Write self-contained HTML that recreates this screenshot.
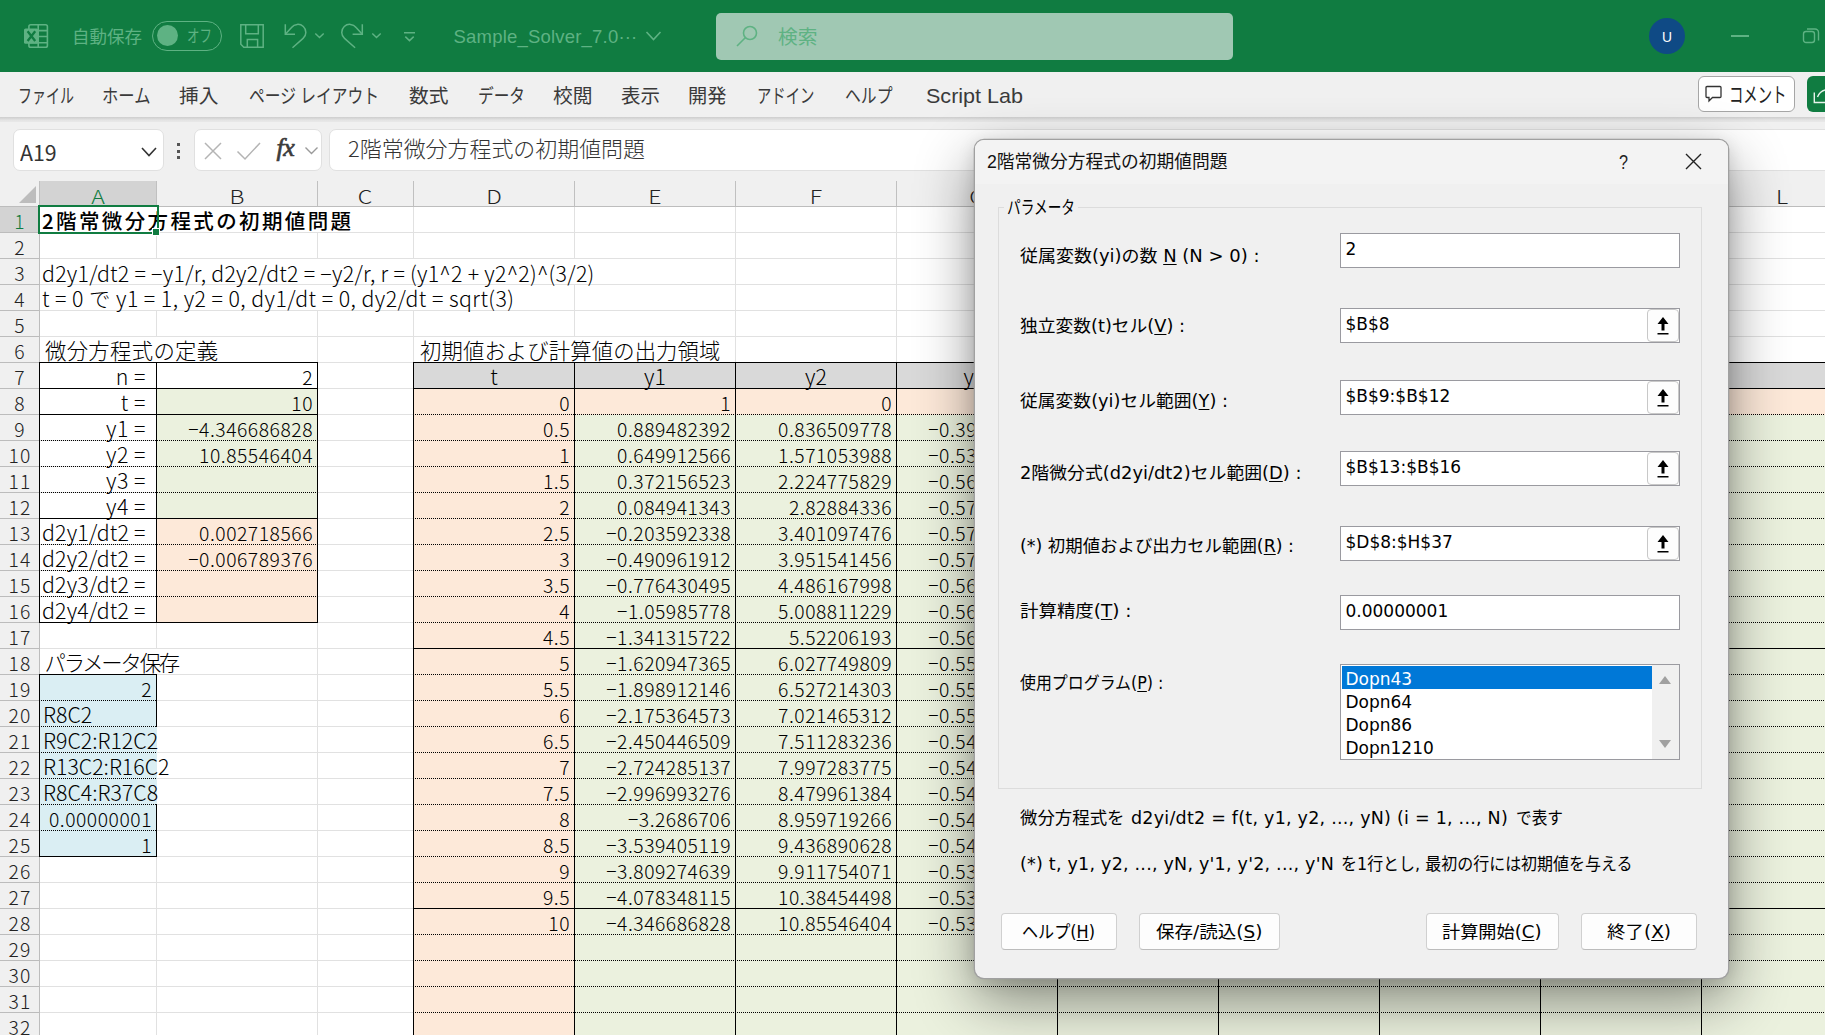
<!DOCTYPE html>
<html lang="ja"><head><meta charset="utf-8"><title>Excel</title>
<style>html,body{margin:0;padding:0}body{width:1825px;height:1035px;overflow:hidden;position:relative;background:#fff;font-family:"Liberation Sans","Noto Sans CJK JP",sans-serif}u{text-underline-offset:2px}</style>
</head><body>
<div style="position:absolute;left:0px;top:0px;width:1825px;height:72px;background:#107c41;"></div>
<svg style="position:absolute;left:0;top:0" width="1825" height="72" viewBox="0 0 1825 72" fill="none" stroke="#5eb283" stroke-width="1.5">
<rect x="28.900" y="24.700" width="18.500" height="22.600" rx="1.800" stroke-width="1.600"/>
<path d="M38.200 24.700v22.600M28.900 30.600h18.500M38.200 36.500h9.200M28.900 42.700h18.500" stroke-width="1.600"/>
<rect x="24" y="28.500" width="14.200" height="15.300" rx="1.600" fill="#5eb283" stroke="none"/>
<path d="M27.600 31.300l7.600 9.700M35.200 31.300l-7.600 9.700" stroke="#107c41" stroke-width="2.300"/>
<path d="M240.800 24.800h22.400v22.400h-19.400l-3-3z"/><path d="M245.700 24.800v9h12.600v-9M247.300 47.200v-7.700h10.300v7.700"/>
<path d="M285.300 24.300v10h9.700"/><path d="M285.800 33.800l5.700-6.300a8 8 0 1 1 11.600 10.900l-10.600 9.300"/>
<path d="M315.300 33.500l4.200 4 4.200-4"/>
<path d="M362.300 24.300v10h-9.700"/><path d="M361.800 33.800l-5.700-6.300a8 8 0 1 0 -11.600 10.900l10.600 9.300"/>
<path d="M372.300 33.500l4.200 4 4.200-4"/>
<path d="M404 32.750h11M405.300 36.600l4.200 4 4.200-4"/>
</svg>
<span style="position:absolute;white-space:pre;left:72px;top:22.02px;height:30px;line-height:30px;font-family:'Liberation Sans','Noto Sans CJK JP',sans-serif;font-size:17.5px;color:#5eb283;font-weight:normal;transform:scaleX(1.0000);transform-origin:0 50%;">自動保存</span>
<div style="position:absolute;left:152px;top:21px;width:70px;height:29.5px;border:1px solid #5eb283;border-radius:15px;box-sizing:border-box;"></div>
<div style="position:absolute;left:157px;top:25px;width:21px;height:21px;background:#5eb283;border-radius:50%;"></div>
<span style="position:absolute;white-space:pre;left:187px;top:22.01px;height:30px;line-height:30px;font-family:'Liberation Sans','Noto Sans CJK JP',sans-serif;font-size:17px;color:#5eb283;font-weight:normal;transform:scaleX(0.7353);transform-origin:0 50%;">オフ</span>
<span style="position:absolute;white-space:pre;left:453.5px;top:22.00px;height:30px;line-height:30px;font-family:'Liberation Sans','Noto Sans CJK JP',sans-serif;font-size:18.5px;color:#5eb283;font-weight:normal;letter-spacing:0.202px;">Sample_Solver_7.0···</span>
<svg style="position:absolute;left:645px;top:30px" width="17" height="12" viewBox="0 0 17 12" fill="none" stroke="#5eb283" stroke-width="1.600"><path d="M1.500 2l7 7.500 7-7.500"/></svg>
<div style="position:absolute;left:716px;top:12.5px;width:517px;height:47px;background:#a0c8b3;border-radius:5px;"></div>
<svg style="position:absolute;left:736px;top:25px" width="22" height="22" viewBox="0 0 22 22" fill="none" stroke="#5eb283" stroke-width="1.600"><circle cx="14" cy="8" r="6.500"/><path d="M9.500 12.500l-8.500 8.500"/></svg>
<span style="position:absolute;white-space:pre;left:778px;top:22.09px;height:30px;line-height:30px;font-family:'Liberation Sans','Noto Sans CJK JP',sans-serif;font-size:19.5px;color:#5eb283;font-weight:normal;transform:scaleX(1.0124);transform-origin:0 50%;">検索</span>
<div style="position:absolute;left:1649px;top:18px;width:36px;height:36px;background:#0f4a85;border-radius:50%;"></div>
<span style="position:absolute;white-space:pre;left:1662px;top:21.50px;height:30px;line-height:30px;font-family:'Liberation Sans','Noto Sans CJK JP',sans-serif;font-size:14px;color:#fff;font-weight:normal;transform:scaleX(0.9877);transform-origin:0 50%;">U</span>
<div style="position:absolute;left:1731px;top:35px;width:18px;height:1.5px;background:#5eb283;"></div>
<svg style="position:absolute;left:1802px;top:27px" width="18" height="18" viewBox="0 0 18 18" fill="none" stroke="#5eb283" stroke-width="1.400"><rect x="1.500" y="4.500" width="11" height="11" rx="2.500"/><path d="M5 2h8a3.500 3.500 0 0 1 3.500 3.500v8"/></svg>
<div style="position:absolute;left:0px;top:72px;width:1825px;height:46px;background:#f0f0f0;"></div>
<div style="position:absolute;left:0px;top:117px;width:1825px;height:8px;background:linear-gradient(#cdcdcd,#e4e4e4 40%,#f0f0f0);"></div>
<span style="position:absolute;white-space:pre;left:17.5px;top:81.09px;height:30px;line-height:30px;font-family:'Liberation Sans','Noto Sans CJK JP',sans-serif;font-size:19.8px;color:#3a3a3a;font-weight:normal;transform:scaleX(0.7076);transform-origin:0 50%;">ファイル</span>
<span style="position:absolute;white-space:pre;left:101.5px;top:81.09px;height:30px;line-height:30px;font-family:'Liberation Sans','Noto Sans CJK JP',sans-serif;font-size:19.8px;color:#3a3a3a;font-weight:normal;transform:scaleX(0.8253);transform-origin:0 50%;">ホーム</span>
<span style="position:absolute;white-space:pre;left:179px;top:81.09px;height:30px;line-height:30px;font-family:'Liberation Sans','Noto Sans CJK JP',sans-serif;font-size:19.8px;color:#3a3a3a;font-weight:normal;transform:scaleX(0.9980);transform-origin:0 50%;">挿入</span>
<span style="position:absolute;white-space:pre;left:248.5px;top:81.09px;height:30px;line-height:30px;font-family:'Liberation Sans','Noto Sans CJK JP',sans-serif;font-size:19.8px;color:#3a3a3a;font-weight:normal;transform:scaleX(0.7958);transform-origin:0 50%;">ページ レイアウト</span>
<span style="position:absolute;white-space:pre;left:409px;top:81.09px;height:30px;line-height:30px;font-family:'Liberation Sans','Noto Sans CJK JP',sans-serif;font-size:19.8px;color:#3a3a3a;font-weight:normal;transform:scaleX(0.9980);transform-origin:0 50%;">数式</span>
<span style="position:absolute;white-space:pre;left:477.5px;top:81.09px;height:30px;line-height:30px;font-family:'Liberation Sans','Noto Sans CJK JP',sans-serif;font-size:19.8px;color:#3a3a3a;font-weight:normal;transform:scaleX(0.7918);transform-origin:0 50%;">データ</span>
<span style="position:absolute;white-space:pre;left:553px;top:81.09px;height:30px;line-height:30px;font-family:'Liberation Sans','Noto Sans CJK JP',sans-serif;font-size:19.8px;color:#3a3a3a;font-weight:normal;transform:scaleX(0.9980);transform-origin:0 50%;">校閲</span>
<span style="position:absolute;white-space:pre;left:620.5px;top:81.09px;height:30px;line-height:30px;font-family:'Liberation Sans','Noto Sans CJK JP',sans-serif;font-size:19.8px;color:#3a3a3a;font-weight:normal;transform:scaleX(0.9854);transform-origin:0 50%;">表示</span>
<span style="position:absolute;white-space:pre;left:688px;top:81.09px;height:30px;line-height:30px;font-family:'Liberation Sans','Noto Sans CJK JP',sans-serif;font-size:19.8px;color:#3a3a3a;font-weight:normal;transform:scaleX(0.9728);transform-origin:0 50%;">開発</span>
<span style="position:absolute;white-space:pre;left:756.5px;top:81.09px;height:30px;line-height:30px;font-family:'Liberation Sans','Noto Sans CJK JP',sans-serif;font-size:19.8px;color:#3a3a3a;font-weight:normal;transform:scaleX(0.7266);transform-origin:0 50%;">アドイン</span>
<span style="position:absolute;white-space:pre;left:845px;top:81.09px;height:30px;line-height:30px;font-family:'Liberation Sans','Noto Sans CJK JP',sans-serif;font-size:19.8px;color:#3a3a3a;font-weight:normal;transform:scaleX(0.8002);transform-origin:0 50%;">ヘルプ</span>
<span style="position:absolute;white-space:pre;left:925.5px;top:80.50px;height:30px;line-height:30px;font-family:'Liberation Sans','Noto Sans CJK JP',sans-serif;font-size:19.8px;color:#3a3a3a;font-weight:normal;transform:scaleX(1.0889);transform-origin:0 50%;">Script Lab</span>
<div style="position:absolute;left:1698px;top:76.3px;width:96.5px;height:35.5px;background:#fff;border:1px solid #a6a6a6;border-radius:6px;box-sizing:border-box;"></div>
<svg style="position:absolute;left:1705px;top:85px" width="18" height="18" viewBox="0 0 18 18" fill="none" stroke="#333" stroke-width="1.300"><path d="M2 1.500h13a1 1 0 0 1 1 1v9a1 1 0 0 1-1 1h-7.500l-3.500 3.500v-3.500h-2a1 1 0 0 1-1-1v-9a1 1 0 0 1 1-1z"/></svg>
<span style="position:absolute;white-space:pre;left:1729px;top:80.33px;height:30px;line-height:30px;font-family:'Liberation Sans','Noto Sans CJK JP',sans-serif;font-size:21px;color:#222;font-weight:normal;transform:scaleX(0.6845);transform-origin:0 50%;">コメント</span>
<div style="position:absolute;left:1807px;top:76.3px;width:30px;height:35.5px;background:#107c41;border-radius:6px;"></div>
<svg style="position:absolute;left:1811px;top:84px" width="16" height="20" viewBox="0 0 16 20" fill="none" stroke="#e8f3ec" stroke-width="1.400"><path d="M3.300 8.500v10h13"/><path d="M6.500 13c1.500-4 5-7 10-7.500"/></svg>
<div style="position:absolute;left:0px;top:122px;width:1825px;height:59px;background:#f0f0f0;"></div>
<div style="position:absolute;left:12.5px;top:129px;width:151px;height:42px;background:#fff;border:1px solid #e0e0e0;border-radius:7px;box-sizing:border-box;"></div>
<span style="position:absolute;white-space:pre;left:19.7px;top:136.50px;height:30px;line-height:30px;font-family:'Noto Sans CJK JP',sans-serif;font-size:21.5px;color:#333;font-weight:400;transform:scaleX(0.9909);transform-origin:0 50%;">A19</span>
<svg style="position:absolute;left:140px;top:146px" width="18" height="12" viewBox="0 0 18 12" fill="none" stroke="#333" stroke-width="1.600"><path d="M2 2l7 7.500 7-7.500"/></svg>
<div style="position:absolute;left:176.5px;top:143px;width:3px;height:3px;background:#555;"></div>
<div style="position:absolute;left:176.5px;top:149.5px;width:3px;height:3px;background:#555;"></div>
<div style="position:absolute;left:176.5px;top:156px;width:3px;height:3px;background:#555;"></div>
<div style="position:absolute;left:194px;top:129px;width:127.5px;height:42px;background:#fff;border:1px solid #e0e0e0;border-radius:7px;box-sizing:border-box;"></div>
<svg style="position:absolute;left:203px;top:141px" width="20" height="20" viewBox="0 0 20 20" fill="none" stroke="#b4b4b4" stroke-width="1.500"><path d="M2 2l16 16M18 2l-16 16"/></svg>
<svg style="position:absolute;left:236px;top:141px" width="26" height="20" viewBox="0 0 26 20" fill="none" stroke="#b4b4b4" stroke-width="1.500"><path d="M1.500 10.500l7.500 7.500 15-16"/></svg>
<span style="position:absolute;left:276.5px;top:133px;font-family:'Liberation Serif',serif;font-style:italic;font-weight:normal;-webkit-text-stroke:0.7px #3c3c3c;font-size:26px;color:#3c3c3c;line-height:30px;letter-spacing:-0.5px">fx</span>
<svg style="position:absolute;left:304px;top:146px" width="15" height="10" viewBox="0 0 15 10" fill="none" stroke="#9a9a9a" stroke-width="1.400"><path d="M1.500 1.500l6 6 6-6"/></svg>
<div style="position:absolute;left:328.5px;top:129px;width:1520px;height:42px;background:#fff;border:1px solid #e0e0e0;border-radius:7px;box-sizing:border-box;"></div>
<span style="position:absolute;white-space:pre;left:348px;top:133.10px;height:30px;line-height:30px;font-family:'Noto Sans CJK JP',sans-serif;font-size:21.5px;color:#333;font-weight:300;transform:scaleX(1.0206);transform-origin:0 50%;">2階常微分方程式の初期値問題</span>
<div id="grid" style="position:absolute;left:0;top:181px;width:1825px;height:854px;overflow:hidden;background:#fff">
<div style="position:absolute;left:0px;top:0px;width:1825px;height:25px;background:#f0f0f0;"></div>
<div style="position:absolute;left:0px;top:25px;width:39px;height:840px;background:#f0f0f0;"></div>
<div style="position:absolute;left:40px;top:0px;width:117px;height:25px;background:#d3d3d3;"></div>
<div style="position:absolute;left:0px;top:26px;width:39px;height:25px;background:#d3d3d3;"></div>
<div style="position:absolute;left:19px;top:5px;width:0;height:0;border-left:17px solid transparent;border-bottom:17px solid #bdbdbd;"></div>
<div style="position:absolute;left:0px;top:25px;width:1825px;height:1px;background:#bdbdbd;"></div>
<div style="position:absolute;left:40px;top:51px;width:1825px;height:1px;background:#e1e1e1;"></div>
<div style="position:absolute;left:0px;top:51px;width:39px;height:1px;background:#bcbcbc;"></div>
<div style="position:absolute;left:40px;top:77px;width:1825px;height:1px;background:#e1e1e1;"></div>
<div style="position:absolute;left:0px;top:77px;width:39px;height:1px;background:#bcbcbc;"></div>
<div style="position:absolute;left:40px;top:103px;width:1825px;height:1px;background:#e1e1e1;"></div>
<div style="position:absolute;left:0px;top:103px;width:39px;height:1px;background:#bcbcbc;"></div>
<div style="position:absolute;left:40px;top:129px;width:1825px;height:1px;background:#e1e1e1;"></div>
<div style="position:absolute;left:0px;top:129px;width:39px;height:1px;background:#bcbcbc;"></div>
<div style="position:absolute;left:40px;top:155px;width:1825px;height:1px;background:#e1e1e1;"></div>
<div style="position:absolute;left:0px;top:155px;width:39px;height:1px;background:#bcbcbc;"></div>
<div style="position:absolute;left:40px;top:181px;width:1825px;height:1px;background:#e1e1e1;"></div>
<div style="position:absolute;left:0px;top:181px;width:39px;height:1px;background:#bcbcbc;"></div>
<div style="position:absolute;left:40px;top:207px;width:1825px;height:1px;background:#e1e1e1;"></div>
<div style="position:absolute;left:0px;top:207px;width:39px;height:1px;background:#bcbcbc;"></div>
<div style="position:absolute;left:40px;top:233px;width:1825px;height:1px;background:#e1e1e1;"></div>
<div style="position:absolute;left:0px;top:233px;width:39px;height:1px;background:#bcbcbc;"></div>
<div style="position:absolute;left:40px;top:259px;width:1825px;height:1px;background:#e1e1e1;"></div>
<div style="position:absolute;left:0px;top:259px;width:39px;height:1px;background:#bcbcbc;"></div>
<div style="position:absolute;left:40px;top:285px;width:1825px;height:1px;background:#e1e1e1;"></div>
<div style="position:absolute;left:0px;top:285px;width:39px;height:1px;background:#bcbcbc;"></div>
<div style="position:absolute;left:40px;top:311px;width:1825px;height:1px;background:#e1e1e1;"></div>
<div style="position:absolute;left:0px;top:311px;width:39px;height:1px;background:#bcbcbc;"></div>
<div style="position:absolute;left:40px;top:337px;width:1825px;height:1px;background:#e1e1e1;"></div>
<div style="position:absolute;left:0px;top:337px;width:39px;height:1px;background:#bcbcbc;"></div>
<div style="position:absolute;left:40px;top:363px;width:1825px;height:1px;background:#e1e1e1;"></div>
<div style="position:absolute;left:0px;top:363px;width:39px;height:1px;background:#bcbcbc;"></div>
<div style="position:absolute;left:40px;top:389px;width:1825px;height:1px;background:#e1e1e1;"></div>
<div style="position:absolute;left:0px;top:389px;width:39px;height:1px;background:#bcbcbc;"></div>
<div style="position:absolute;left:40px;top:415px;width:1825px;height:1px;background:#e1e1e1;"></div>
<div style="position:absolute;left:0px;top:415px;width:39px;height:1px;background:#bcbcbc;"></div>
<div style="position:absolute;left:40px;top:441px;width:1825px;height:1px;background:#e1e1e1;"></div>
<div style="position:absolute;left:0px;top:441px;width:39px;height:1px;background:#bcbcbc;"></div>
<div style="position:absolute;left:40px;top:467px;width:1825px;height:1px;background:#e1e1e1;"></div>
<div style="position:absolute;left:0px;top:467px;width:39px;height:1px;background:#bcbcbc;"></div>
<div style="position:absolute;left:40px;top:493px;width:1825px;height:1px;background:#e1e1e1;"></div>
<div style="position:absolute;left:0px;top:493px;width:39px;height:1px;background:#bcbcbc;"></div>
<div style="position:absolute;left:40px;top:519px;width:1825px;height:1px;background:#e1e1e1;"></div>
<div style="position:absolute;left:0px;top:519px;width:39px;height:1px;background:#bcbcbc;"></div>
<div style="position:absolute;left:40px;top:545px;width:1825px;height:1px;background:#e1e1e1;"></div>
<div style="position:absolute;left:0px;top:545px;width:39px;height:1px;background:#bcbcbc;"></div>
<div style="position:absolute;left:40px;top:571px;width:1825px;height:1px;background:#e1e1e1;"></div>
<div style="position:absolute;left:0px;top:571px;width:39px;height:1px;background:#bcbcbc;"></div>
<div style="position:absolute;left:40px;top:597px;width:1825px;height:1px;background:#e1e1e1;"></div>
<div style="position:absolute;left:0px;top:597px;width:39px;height:1px;background:#bcbcbc;"></div>
<div style="position:absolute;left:40px;top:623px;width:1825px;height:1px;background:#e1e1e1;"></div>
<div style="position:absolute;left:0px;top:623px;width:39px;height:1px;background:#bcbcbc;"></div>
<div style="position:absolute;left:40px;top:649px;width:1825px;height:1px;background:#e1e1e1;"></div>
<div style="position:absolute;left:0px;top:649px;width:39px;height:1px;background:#bcbcbc;"></div>
<div style="position:absolute;left:40px;top:675px;width:1825px;height:1px;background:#e1e1e1;"></div>
<div style="position:absolute;left:0px;top:675px;width:39px;height:1px;background:#bcbcbc;"></div>
<div style="position:absolute;left:40px;top:701px;width:1825px;height:1px;background:#e1e1e1;"></div>
<div style="position:absolute;left:0px;top:701px;width:39px;height:1px;background:#bcbcbc;"></div>
<div style="position:absolute;left:40px;top:727px;width:1825px;height:1px;background:#e1e1e1;"></div>
<div style="position:absolute;left:0px;top:727px;width:39px;height:1px;background:#bcbcbc;"></div>
<div style="position:absolute;left:40px;top:753px;width:1825px;height:1px;background:#e1e1e1;"></div>
<div style="position:absolute;left:0px;top:753px;width:39px;height:1px;background:#bcbcbc;"></div>
<div style="position:absolute;left:40px;top:779px;width:1825px;height:1px;background:#e1e1e1;"></div>
<div style="position:absolute;left:0px;top:779px;width:39px;height:1px;background:#bcbcbc;"></div>
<div style="position:absolute;left:40px;top:805px;width:1825px;height:1px;background:#e1e1e1;"></div>
<div style="position:absolute;left:0px;top:805px;width:39px;height:1px;background:#bcbcbc;"></div>
<div style="position:absolute;left:40px;top:831px;width:1825px;height:1px;background:#e1e1e1;"></div>
<div style="position:absolute;left:0px;top:831px;width:39px;height:1px;background:#bcbcbc;"></div>
<div style="position:absolute;left:40px;top:857px;width:1825px;height:1px;background:#e1e1e1;"></div>
<div style="position:absolute;left:0px;top:857px;width:39px;height:1px;background:#bcbcbc;"></div>
<div style="position:absolute;left:39px;top:26px;width:1px;height:840px;background:#bdbdbd;"></div>
<div style="position:absolute;left:39px;top:0px;width:1px;height:25px;background:#c0c0c0;"></div>
<div style="position:absolute;left:156px;top:26px;width:1px;height:840px;background:#e1e1e1;"></div>
<div style="position:absolute;left:156px;top:0px;width:1px;height:25px;background:#c0c0c0;"></div>
<div style="position:absolute;left:317px;top:26px;width:1px;height:840px;background:#e1e1e1;"></div>
<div style="position:absolute;left:317px;top:0px;width:1px;height:25px;background:#c0c0c0;"></div>
<div style="position:absolute;left:413px;top:26px;width:1px;height:840px;background:#e1e1e1;"></div>
<div style="position:absolute;left:413px;top:0px;width:1px;height:25px;background:#c0c0c0;"></div>
<div style="position:absolute;left:574px;top:26px;width:1px;height:840px;background:#e1e1e1;"></div>
<div style="position:absolute;left:574px;top:0px;width:1px;height:25px;background:#c0c0c0;"></div>
<div style="position:absolute;left:735px;top:26px;width:1px;height:840px;background:#e1e1e1;"></div>
<div style="position:absolute;left:735px;top:0px;width:1px;height:25px;background:#c0c0c0;"></div>
<div style="position:absolute;left:896px;top:26px;width:1px;height:840px;background:#e1e1e1;"></div>
<div style="position:absolute;left:896px;top:0px;width:1px;height:25px;background:#c0c0c0;"></div>
<div style="position:absolute;left:1057px;top:26px;width:1px;height:840px;background:#e1e1e1;"></div>
<div style="position:absolute;left:1057px;top:0px;width:1px;height:25px;background:#c0c0c0;"></div>
<div style="position:absolute;left:1218px;top:26px;width:1px;height:840px;background:#e1e1e1;"></div>
<div style="position:absolute;left:1218px;top:0px;width:1px;height:25px;background:#c0c0c0;"></div>
<div style="position:absolute;left:1379px;top:26px;width:1px;height:840px;background:#e1e1e1;"></div>
<div style="position:absolute;left:1379px;top:0px;width:1px;height:25px;background:#c0c0c0;"></div>
<div style="position:absolute;left:1540px;top:26px;width:1px;height:840px;background:#e1e1e1;"></div>
<div style="position:absolute;left:1540px;top:0px;width:1px;height:25px;background:#c0c0c0;"></div>
<div style="position:absolute;left:1701px;top:26px;width:1px;height:840px;background:#e1e1e1;"></div>
<div style="position:absolute;left:1701px;top:0px;width:1px;height:25px;background:#c0c0c0;"></div>
<div style="position:absolute;left:1862px;top:26px;width:1px;height:840px;background:#e1e1e1;"></div>
<div style="position:absolute;left:1862px;top:0px;width:1px;height:25px;background:#c0c0c0;"></div>
<div style="position:absolute;left:156px;top:26px;width:1px;height:25px;background:#fff;"></div>
<div style="position:absolute;left:317px;top:26px;width:1px;height:25px;background:#fff;"></div>
<div style="position:absolute;left:156px;top:78px;width:1px;height:25px;background:#fff;"></div>
<div style="position:absolute;left:317px;top:78px;width:1px;height:25px;background:#fff;"></div>
<div style="position:absolute;left:413px;top:78px;width:1px;height:25px;background:#fff;"></div>
<div style="position:absolute;left:574px;top:78px;width:1px;height:25px;background:#fff;"></div>
<div style="position:absolute;left:156px;top:104px;width:1px;height:25px;background:#fff;"></div>
<div style="position:absolute;left:317px;top:104px;width:1px;height:25px;background:#fff;"></div>
<div style="position:absolute;left:413px;top:104px;width:1px;height:25px;background:#fff;"></div>
<div style="position:absolute;left:156px;top:156px;width:1px;height:25px;background:#fff;"></div>
<div style="position:absolute;left:574px;top:156px;width:1px;height:25px;background:#fff;"></div>
<div style="position:absolute;left:156px;top:468px;width:1px;height:25px;background:#fff;"></div>
<div style="position:absolute;left:157px;top:208px;width:161px;height:130px;background:#ebf1de;"></div>
<div style="position:absolute;left:157px;top:338px;width:161px;height:104px;background:#fde9d9;"></div>
<div style="position:absolute;left:40px;top:494px;width:117px;height:182px;background:#daeef3;"></div>
<div style="position:absolute;left:414px;top:182px;width:1449px;height:26px;background:#d9d9d9;"></div>
<div style="position:absolute;left:414px;top:208px;width:1449px;height:26px;background:#fde9d9;"></div>
<div style="position:absolute;left:414px;top:234px;width:161px;height:650px;background:#fde9d9;"></div>
<div style="position:absolute;left:575px;top:234px;width:1288px;height:650px;background:#ebf1de;"></div>
<div style="position:absolute;left:39px;top:181px;width:279px;height:1px;background:#000;"></div>
<div style="position:absolute;left:39px;top:207px;width:279px;height:1px;background:#000;"></div>
<div style="position:absolute;left:39px;top:233px;width:279px;height:1px;background:#000;"></div>
<div style="position:absolute;left:39px;top:259px;width:279px;height:1px;background:repeating-linear-gradient(90deg,#000 0 1px,transparent 1px 2px);"></div>
<div style="position:absolute;left:39px;top:285px;width:279px;height:1px;background:repeating-linear-gradient(90deg,#000 0 1px,transparent 1px 2px);"></div>
<div style="position:absolute;left:39px;top:311px;width:279px;height:1px;background:repeating-linear-gradient(90deg,#000 0 1px,transparent 1px 2px);"></div>
<div style="position:absolute;left:39px;top:337px;width:279px;height:1px;background:#000;"></div>
<div style="position:absolute;left:39px;top:363px;width:279px;height:1px;background:repeating-linear-gradient(90deg,#000 0 1px,transparent 1px 2px);"></div>
<div style="position:absolute;left:39px;top:389px;width:279px;height:1px;background:repeating-linear-gradient(90deg,#000 0 1px,transparent 1px 2px);"></div>
<div style="position:absolute;left:39px;top:415px;width:279px;height:1px;background:repeating-linear-gradient(90deg,#000 0 1px,transparent 1px 2px);"></div>
<div style="position:absolute;left:39px;top:441px;width:279px;height:1px;background:#000;"></div>
<div style="position:absolute;left:39px;top:181px;width:1px;height:261px;background:#000;"></div>
<div style="position:absolute;left:156px;top:181px;width:1px;height:261px;background:#000;"></div>
<div style="position:absolute;left:317px;top:181px;width:1px;height:261px;background:#000;"></div>
<div style="position:absolute;left:39px;top:493px;width:118px;height:1px;background:#000;"></div>
<div style="position:absolute;left:39px;top:519px;width:118px;height:1px;background:repeating-linear-gradient(90deg,#000 0 1px,transparent 1px 2px);"></div>
<div style="position:absolute;left:39px;top:545px;width:118px;height:1px;background:repeating-linear-gradient(90deg,#000 0 1px,transparent 1px 2px);"></div>
<div style="position:absolute;left:39px;top:571px;width:118px;height:1px;background:repeating-linear-gradient(90deg,#000 0 1px,transparent 1px 2px);"></div>
<div style="position:absolute;left:39px;top:597px;width:118px;height:1px;background:repeating-linear-gradient(90deg,#000 0 1px,transparent 1px 2px);"></div>
<div style="position:absolute;left:39px;top:623px;width:118px;height:1px;background:repeating-linear-gradient(90deg,#000 0 1px,transparent 1px 2px);"></div>
<div style="position:absolute;left:39px;top:649px;width:118px;height:1px;background:repeating-linear-gradient(90deg,#000 0 1px,transparent 1px 2px);"></div>
<div style="position:absolute;left:39px;top:675px;width:118px;height:1px;background:#000;"></div>
<div style="position:absolute;left:39px;top:493px;width:1px;height:183px;background:#000;"></div>
<div style="position:absolute;left:156px;top:493px;width:1px;height:53px;background:#000;"></div>
<div style="position:absolute;left:156px;top:623px;width:1px;height:53px;background:#000;"></div>
<div style="position:absolute;left:413px;top:181px;width:1450px;height:1px;background:#000;"></div>
<div style="position:absolute;left:413px;top:207px;width:1450px;height:1px;background:#000;"></div>
<div style="position:absolute;left:413px;top:233px;width:1450px;height:1px;background:repeating-linear-gradient(90deg,#000 0 1px,transparent 1px 2px);"></div>
<div style="position:absolute;left:413px;top:259px;width:1450px;height:1px;background:repeating-linear-gradient(90deg,#000 0 1px,transparent 1px 2px);"></div>
<div style="position:absolute;left:413px;top:285px;width:1450px;height:1px;background:repeating-linear-gradient(90deg,#000 0 1px,transparent 1px 2px);"></div>
<div style="position:absolute;left:413px;top:311px;width:1450px;height:1px;background:repeating-linear-gradient(90deg,#000 0 1px,transparent 1px 2px);"></div>
<div style="position:absolute;left:413px;top:337px;width:1450px;height:1px;background:repeating-linear-gradient(90deg,#000 0 1px,transparent 1px 2px);"></div>
<div style="position:absolute;left:413px;top:363px;width:1450px;height:1px;background:repeating-linear-gradient(90deg,#000 0 1px,transparent 1px 2px);"></div>
<div style="position:absolute;left:413px;top:389px;width:1450px;height:1px;background:repeating-linear-gradient(90deg,#000 0 1px,transparent 1px 2px);"></div>
<div style="position:absolute;left:413px;top:415px;width:1450px;height:1px;background:repeating-linear-gradient(90deg,#000 0 1px,transparent 1px 2px);"></div>
<div style="position:absolute;left:413px;top:441px;width:1450px;height:1px;background:repeating-linear-gradient(90deg,#000 0 1px,transparent 1px 2px);"></div>
<div style="position:absolute;left:413px;top:467px;width:1450px;height:1px;background:#000;"></div>
<div style="position:absolute;left:413px;top:493px;width:1450px;height:1px;background:repeating-linear-gradient(90deg,#000 0 1px,transparent 1px 2px);"></div>
<div style="position:absolute;left:413px;top:519px;width:1450px;height:1px;background:repeating-linear-gradient(90deg,#000 0 1px,transparent 1px 2px);"></div>
<div style="position:absolute;left:413px;top:545px;width:1450px;height:1px;background:repeating-linear-gradient(90deg,#000 0 1px,transparent 1px 2px);"></div>
<div style="position:absolute;left:413px;top:571px;width:1450px;height:1px;background:repeating-linear-gradient(90deg,#000 0 1px,transparent 1px 2px);"></div>
<div style="position:absolute;left:413px;top:597px;width:1450px;height:1px;background:repeating-linear-gradient(90deg,#000 0 1px,transparent 1px 2px);"></div>
<div style="position:absolute;left:413px;top:623px;width:1450px;height:1px;background:repeating-linear-gradient(90deg,#000 0 1px,transparent 1px 2px);"></div>
<div style="position:absolute;left:413px;top:649px;width:1450px;height:1px;background:repeating-linear-gradient(90deg,#000 0 1px,transparent 1px 2px);"></div>
<div style="position:absolute;left:413px;top:675px;width:1450px;height:1px;background:repeating-linear-gradient(90deg,#000 0 1px,transparent 1px 2px);"></div>
<div style="position:absolute;left:413px;top:701px;width:1450px;height:1px;background:repeating-linear-gradient(90deg,#000 0 1px,transparent 1px 2px);"></div>
<div style="position:absolute;left:413px;top:727px;width:1450px;height:1px;background:#000;"></div>
<div style="position:absolute;left:413px;top:753px;width:1450px;height:1px;background:repeating-linear-gradient(90deg,#000 0 1px,transparent 1px 2px);"></div>
<div style="position:absolute;left:413px;top:779px;width:1450px;height:1px;background:repeating-linear-gradient(90deg,#000 0 1px,transparent 1px 2px);"></div>
<div style="position:absolute;left:413px;top:805px;width:1450px;height:1px;background:repeating-linear-gradient(90deg,#000 0 1px,transparent 1px 2px);"></div>
<div style="position:absolute;left:413px;top:831px;width:1450px;height:1px;background:repeating-linear-gradient(90deg,#000 0 1px,transparent 1px 2px);"></div>
<div style="position:absolute;left:413px;top:857px;width:1450px;height:1px;background:repeating-linear-gradient(90deg,#000 0 1px,transparent 1px 2px);"></div>
<div style="position:absolute;left:413px;top:181px;width:1px;height:703px;background:#000;"></div>
<div style="position:absolute;left:574px;top:181px;width:1px;height:703px;background:#000;"></div>
<div style="position:absolute;left:735px;top:181px;width:1px;height:703px;background:#000;"></div>
<div style="position:absolute;left:896px;top:181px;width:1px;height:703px;background:#000;"></div>
<div style="position:absolute;left:1057px;top:181px;width:1px;height:703px;background:#000;"></div>
<div style="position:absolute;left:1218px;top:181px;width:1px;height:703px;background:#000;"></div>
<div style="position:absolute;left:1379px;top:181px;width:1px;height:703px;background:#000;"></div>
<div style="position:absolute;left:1540px;top:181px;width:1px;height:703px;background:#000;"></div>
<div style="position:absolute;left:1701px;top:181px;width:1px;height:703px;background:#000;"></div>
<span style="position:absolute;white-space:pre;left:87.5px;top:-0.50px;height:30px;line-height:30px;font-family:'Noto Sans CJK JP',sans-serif;font-size:19px;color:#107c41;font-weight:300;width:20px;text-align:center;transform:scaleX(1.22);">A</span>
<span style="position:absolute;white-space:pre;left:226.5px;top:-0.50px;height:30px;line-height:30px;font-family:'Noto Sans CJK JP',sans-serif;font-size:19px;color:#222;font-weight:300;width:20px;text-align:center;transform:scaleX(1.22);">B</span>
<span style="position:absolute;white-space:pre;left:355.0px;top:-0.50px;height:30px;line-height:30px;font-family:'Noto Sans CJK JP',sans-serif;font-size:19px;color:#222;font-weight:300;width:20px;text-align:center;transform:scaleX(1.22);">C</span>
<span style="position:absolute;white-space:pre;left:483.5px;top:-0.50px;height:30px;line-height:30px;font-family:'Noto Sans CJK JP',sans-serif;font-size:19px;color:#222;font-weight:300;width:20px;text-align:center;transform:scaleX(1.22);">D</span>
<span style="position:absolute;white-space:pre;left:644.5px;top:-0.50px;height:30px;line-height:30px;font-family:'Noto Sans CJK JP',sans-serif;font-size:19px;color:#222;font-weight:300;width:20px;text-align:center;transform:scaleX(1.22);">E</span>
<span style="position:absolute;white-space:pre;left:805.5px;top:-0.50px;height:30px;line-height:30px;font-family:'Noto Sans CJK JP',sans-serif;font-size:19px;color:#222;font-weight:300;width:20px;text-align:center;transform:scaleX(1.22);">F</span>
<span style="position:absolute;white-space:pre;left:966.5px;top:-0.50px;height:30px;line-height:30px;font-family:'Noto Sans CJK JP',sans-serif;font-size:19px;color:#222;font-weight:300;width:20px;text-align:center;transform:scaleX(1.22);">G</span>
<span style="position:absolute;white-space:pre;left:1127.5px;top:-0.50px;height:30px;line-height:30px;font-family:'Noto Sans CJK JP',sans-serif;font-size:19px;color:#222;font-weight:300;width:20px;text-align:center;transform:scaleX(1.22);">H</span>
<span style="position:absolute;white-space:pre;left:1288.5px;top:-0.50px;height:30px;line-height:30px;font-family:'Noto Sans CJK JP',sans-serif;font-size:19px;color:#222;font-weight:300;width:20px;text-align:center;transform:scaleX(1.22);">I</span>
<span style="position:absolute;white-space:pre;left:1449.5px;top:-0.50px;height:30px;line-height:30px;font-family:'Noto Sans CJK JP',sans-serif;font-size:19px;color:#222;font-weight:300;width:20px;text-align:center;transform:scaleX(1.22);">J</span>
<span style="position:absolute;white-space:pre;left:1610.5px;top:-0.50px;height:30px;line-height:30px;font-family:'Noto Sans CJK JP',sans-serif;font-size:19px;color:#222;font-weight:300;width:20px;text-align:center;transform:scaleX(1.22);">K</span>
<span style="position:absolute;white-space:pre;left:1771.5px;top:-0.50px;height:30px;line-height:30px;font-family:'Noto Sans CJK JP',sans-serif;font-size:19px;color:#222;font-weight:300;width:20px;text-align:center;transform:scaleX(1.22);">L</span>
<div style="position:absolute;left:0;top:26px;width:39px;height:25px;line-height:28.2px;text-align:center;font-family:'Noto Sans CJK JP','IPAGothic',sans-serif;font-weight:300;font-size:19.3px;letter-spacing:1.3px;padding-left:1px;box-sizing:border-box;color:#107c41">1</div>
<div style="position:absolute;left:0;top:52px;width:39px;height:25px;line-height:28.2px;text-align:center;font-family:'Noto Sans CJK JP','IPAGothic',sans-serif;font-weight:300;font-size:19.3px;letter-spacing:1.3px;padding-left:1px;box-sizing:border-box;color:#222">2</div>
<div style="position:absolute;left:0;top:78px;width:39px;height:25px;line-height:28.2px;text-align:center;font-family:'Noto Sans CJK JP','IPAGothic',sans-serif;font-weight:300;font-size:19.3px;letter-spacing:1.3px;padding-left:1px;box-sizing:border-box;color:#222">3</div>
<div style="position:absolute;left:0;top:104px;width:39px;height:25px;line-height:28.2px;text-align:center;font-family:'Noto Sans CJK JP','IPAGothic',sans-serif;font-weight:300;font-size:19.3px;letter-spacing:1.3px;padding-left:1px;box-sizing:border-box;color:#222">4</div>
<div style="position:absolute;left:0;top:130px;width:39px;height:25px;line-height:28.2px;text-align:center;font-family:'Noto Sans CJK JP','IPAGothic',sans-serif;font-weight:300;font-size:19.3px;letter-spacing:1.3px;padding-left:1px;box-sizing:border-box;color:#222">5</div>
<div style="position:absolute;left:0;top:156px;width:39px;height:25px;line-height:28.2px;text-align:center;font-family:'Noto Sans CJK JP','IPAGothic',sans-serif;font-weight:300;font-size:19.3px;letter-spacing:1.3px;padding-left:1px;box-sizing:border-box;color:#222">6</div>
<div style="position:absolute;left:0;top:182px;width:39px;height:25px;line-height:28.2px;text-align:center;font-family:'Noto Sans CJK JP','IPAGothic',sans-serif;font-weight:300;font-size:19.3px;letter-spacing:1.3px;padding-left:1px;box-sizing:border-box;color:#222">7</div>
<div style="position:absolute;left:0;top:208px;width:39px;height:25px;line-height:28.2px;text-align:center;font-family:'Noto Sans CJK JP','IPAGothic',sans-serif;font-weight:300;font-size:19.3px;letter-spacing:1.3px;padding-left:1px;box-sizing:border-box;color:#222">8</div>
<div style="position:absolute;left:0;top:234px;width:39px;height:25px;line-height:28.2px;text-align:center;font-family:'Noto Sans CJK JP','IPAGothic',sans-serif;font-weight:300;font-size:19.3px;letter-spacing:1.3px;padding-left:1px;box-sizing:border-box;color:#222">9</div>
<div style="position:absolute;left:0;top:260px;width:39px;height:25px;line-height:28.2px;text-align:center;font-family:'Noto Sans CJK JP','IPAGothic',sans-serif;font-weight:300;font-size:19.3px;letter-spacing:1.3px;padding-left:1px;box-sizing:border-box;color:#222">10</div>
<div style="position:absolute;left:0;top:286px;width:39px;height:25px;line-height:28.2px;text-align:center;font-family:'Noto Sans CJK JP','IPAGothic',sans-serif;font-weight:300;font-size:19.3px;letter-spacing:1.3px;padding-left:1px;box-sizing:border-box;color:#222">11</div>
<div style="position:absolute;left:0;top:312px;width:39px;height:25px;line-height:28.2px;text-align:center;font-family:'Noto Sans CJK JP','IPAGothic',sans-serif;font-weight:300;font-size:19.3px;letter-spacing:1.3px;padding-left:1px;box-sizing:border-box;color:#222">12</div>
<div style="position:absolute;left:0;top:338px;width:39px;height:25px;line-height:28.2px;text-align:center;font-family:'Noto Sans CJK JP','IPAGothic',sans-serif;font-weight:300;font-size:19.3px;letter-spacing:1.3px;padding-left:1px;box-sizing:border-box;color:#222">13</div>
<div style="position:absolute;left:0;top:364px;width:39px;height:25px;line-height:28.2px;text-align:center;font-family:'Noto Sans CJK JP','IPAGothic',sans-serif;font-weight:300;font-size:19.3px;letter-spacing:1.3px;padding-left:1px;box-sizing:border-box;color:#222">14</div>
<div style="position:absolute;left:0;top:390px;width:39px;height:25px;line-height:28.2px;text-align:center;font-family:'Noto Sans CJK JP','IPAGothic',sans-serif;font-weight:300;font-size:19.3px;letter-spacing:1.3px;padding-left:1px;box-sizing:border-box;color:#222">15</div>
<div style="position:absolute;left:0;top:416px;width:39px;height:25px;line-height:28.2px;text-align:center;font-family:'Noto Sans CJK JP','IPAGothic',sans-serif;font-weight:300;font-size:19.3px;letter-spacing:1.3px;padding-left:1px;box-sizing:border-box;color:#222">16</div>
<div style="position:absolute;left:0;top:442px;width:39px;height:25px;line-height:28.2px;text-align:center;font-family:'Noto Sans CJK JP','IPAGothic',sans-serif;font-weight:300;font-size:19.3px;letter-spacing:1.3px;padding-left:1px;box-sizing:border-box;color:#222">17</div>
<div style="position:absolute;left:0;top:468px;width:39px;height:25px;line-height:28.2px;text-align:center;font-family:'Noto Sans CJK JP','IPAGothic',sans-serif;font-weight:300;font-size:19.3px;letter-spacing:1.3px;padding-left:1px;box-sizing:border-box;color:#222">18</div>
<div style="position:absolute;left:0;top:494px;width:39px;height:25px;line-height:28.2px;text-align:center;font-family:'Noto Sans CJK JP','IPAGothic',sans-serif;font-weight:300;font-size:19.3px;letter-spacing:1.3px;padding-left:1px;box-sizing:border-box;color:#222">19</div>
<div style="position:absolute;left:0;top:520px;width:39px;height:25px;line-height:28.2px;text-align:center;font-family:'Noto Sans CJK JP','IPAGothic',sans-serif;font-weight:300;font-size:19.3px;letter-spacing:1.3px;padding-left:1px;box-sizing:border-box;color:#222">20</div>
<div style="position:absolute;left:0;top:546px;width:39px;height:25px;line-height:28.2px;text-align:center;font-family:'Noto Sans CJK JP','IPAGothic',sans-serif;font-weight:300;font-size:19.3px;letter-spacing:1.3px;padding-left:1px;box-sizing:border-box;color:#222">21</div>
<div style="position:absolute;left:0;top:572px;width:39px;height:25px;line-height:28.2px;text-align:center;font-family:'Noto Sans CJK JP','IPAGothic',sans-serif;font-weight:300;font-size:19.3px;letter-spacing:1.3px;padding-left:1px;box-sizing:border-box;color:#222">22</div>
<div style="position:absolute;left:0;top:598px;width:39px;height:25px;line-height:28.2px;text-align:center;font-family:'Noto Sans CJK JP','IPAGothic',sans-serif;font-weight:300;font-size:19.3px;letter-spacing:1.3px;padding-left:1px;box-sizing:border-box;color:#222">23</div>
<div style="position:absolute;left:0;top:624px;width:39px;height:25px;line-height:28.2px;text-align:center;font-family:'Noto Sans CJK JP','IPAGothic',sans-serif;font-weight:300;font-size:19.3px;letter-spacing:1.3px;padding-left:1px;box-sizing:border-box;color:#222">24</div>
<div style="position:absolute;left:0;top:650px;width:39px;height:25px;line-height:28.2px;text-align:center;font-family:'Noto Sans CJK JP','IPAGothic',sans-serif;font-weight:300;font-size:19.3px;letter-spacing:1.3px;padding-left:1px;box-sizing:border-box;color:#222">25</div>
<div style="position:absolute;left:0;top:676px;width:39px;height:25px;line-height:28.2px;text-align:center;font-family:'Noto Sans CJK JP','IPAGothic',sans-serif;font-weight:300;font-size:19.3px;letter-spacing:1.3px;padding-left:1px;box-sizing:border-box;color:#222">26</div>
<div style="position:absolute;left:0;top:702px;width:39px;height:25px;line-height:28.2px;text-align:center;font-family:'Noto Sans CJK JP','IPAGothic',sans-serif;font-weight:300;font-size:19.3px;letter-spacing:1.3px;padding-left:1px;box-sizing:border-box;color:#222">27</div>
<div style="position:absolute;left:0;top:728px;width:39px;height:25px;line-height:28.2px;text-align:center;font-family:'Noto Sans CJK JP','IPAGothic',sans-serif;font-weight:300;font-size:19.3px;letter-spacing:1.3px;padding-left:1px;box-sizing:border-box;color:#222">28</div>
<div style="position:absolute;left:0;top:754px;width:39px;height:25px;line-height:28.2px;text-align:center;font-family:'Noto Sans CJK JP','IPAGothic',sans-serif;font-weight:300;font-size:19.3px;letter-spacing:1.3px;padding-left:1px;box-sizing:border-box;color:#222">29</div>
<div style="position:absolute;left:0;top:780px;width:39px;height:25px;line-height:28.2px;text-align:center;font-family:'Noto Sans CJK JP','IPAGothic',sans-serif;font-weight:300;font-size:19.3px;letter-spacing:1.3px;padding-left:1px;box-sizing:border-box;color:#222">30</div>
<div style="position:absolute;left:0;top:806px;width:39px;height:25px;line-height:28.2px;text-align:center;font-family:'Noto Sans CJK JP','IPAGothic',sans-serif;font-weight:300;font-size:19.3px;letter-spacing:1.3px;padding-left:1px;box-sizing:border-box;color:#222">31</div>
<div style="position:absolute;left:0;top:832px;width:39px;height:25px;line-height:28.2px;text-align:center;font-family:'Noto Sans CJK JP','IPAGothic',sans-serif;font-weight:300;font-size:19.3px;letter-spacing:1.3px;padding-left:1px;box-sizing:border-box;color:#222">32</div>
<div style="position:absolute;left:40px;top:182px;height:25px;line-height:26.6px;white-space:pre;font-family:'Noto Sans CJK JP',sans-serif;font-weight:300;font-size:21.33px;letter-spacing:0.5px;color:#000;padding-right:10px;width:116px;text-align:right;padding-right:4px;box-sizing:border-box;padding-right:10px;">n =</div>
<div style="position:absolute;left:40px;top:208px;height:25px;line-height:26.6px;white-space:pre;font-family:'Noto Sans CJK JP',sans-serif;font-weight:300;font-size:21.33px;letter-spacing:0.5px;color:#000;padding-right:10px;width:116px;text-align:right;padding-right:4px;box-sizing:border-box;padding-right:10px;">t =</div>
<div style="position:absolute;left:40px;top:234px;height:25px;line-height:26.6px;white-space:pre;font-family:'Noto Sans CJK JP',sans-serif;font-weight:300;font-size:21.33px;letter-spacing:0.5px;color:#000;padding-right:10px;width:116px;text-align:right;padding-right:4px;box-sizing:border-box;padding-right:10px;">y1 =</div>
<div style="position:absolute;left:40px;top:260px;height:25px;line-height:26.6px;white-space:pre;font-family:'Noto Sans CJK JP',sans-serif;font-weight:300;font-size:21.33px;letter-spacing:0.5px;color:#000;padding-right:10px;width:116px;text-align:right;padding-right:4px;box-sizing:border-box;padding-right:10px;">y2 =</div>
<div style="position:absolute;left:40px;top:286px;height:25px;line-height:26.6px;white-space:pre;font-family:'Noto Sans CJK JP',sans-serif;font-weight:300;font-size:21.33px;letter-spacing:0.5px;color:#000;padding-right:10px;width:116px;text-align:right;padding-right:4px;box-sizing:border-box;padding-right:10px;">y3 =</div>
<div style="position:absolute;left:40px;top:312px;height:25px;line-height:26.6px;white-space:pre;font-family:'Noto Sans CJK JP',sans-serif;font-weight:300;font-size:21.33px;letter-spacing:0.5px;color:#000;padding-right:10px;width:116px;text-align:right;padding-right:4px;box-sizing:border-box;padding-right:10px;">y4 =</div>
<div style="position:absolute;left:40px;top:338px;height:25px;line-height:26.6px;white-space:pre;font-family:'Noto Sans CJK JP',sans-serif;font-weight:300;font-size:21.33px;letter-spacing:0.2px;color:#000;padding-left:2px;padding-left:3px;padding-left:2px;">d2y1/dt2 =</div>
<div style="position:absolute;left:40px;top:364px;height:25px;line-height:26.6px;white-space:pre;font-family:'Noto Sans CJK JP',sans-serif;font-weight:300;font-size:21.33px;letter-spacing:0.2px;color:#000;padding-left:2px;padding-left:3px;padding-left:2px;">d2y2/dt2 =</div>
<div style="position:absolute;left:40px;top:390px;height:25px;line-height:26.6px;white-space:pre;font-family:'Noto Sans CJK JP',sans-serif;font-weight:300;font-size:21.33px;letter-spacing:0.2px;color:#000;padding-left:2px;padding-left:3px;padding-left:2px;">d2y3/dt2 =</div>
<div style="position:absolute;left:40px;top:416px;height:25px;line-height:26.6px;white-space:pre;font-family:'Noto Sans CJK JP',sans-serif;font-weight:300;font-size:21.33px;letter-spacing:0.2px;color:#000;padding-left:2px;padding-left:3px;padding-left:2px;">d2y4/dt2 =</div>
<div style="position:absolute;left:157px;top:182px;height:25px;line-height:28.2px;white-space:pre;font-family:'Noto Sans CJK JP','IPAGothic',sans-serif;font-weight:300;font-size:19.3px;letter-spacing:0.54px;color:#000;width:160px;text-align:right;padding-right:4px;box-sizing:border-box;">2</div>
<div style="position:absolute;left:157px;top:208px;height:25px;line-height:28.2px;white-space:pre;font-family:'Noto Sans CJK JP','IPAGothic',sans-serif;font-weight:300;font-size:19.3px;letter-spacing:0.54px;color:#000;width:160px;text-align:right;padding-right:4px;box-sizing:border-box;">10</div>
<div style="position:absolute;left:157px;top:234px;height:25px;line-height:28.2px;white-space:pre;font-family:'Noto Sans CJK JP','IPAGothic',sans-serif;font-weight:300;font-size:19.3px;letter-spacing:0.54px;color:#000;width:160px;text-align:right;padding-right:4px;box-sizing:border-box;">−4.346686828</div>
<div style="position:absolute;left:157px;top:260px;height:25px;line-height:28.2px;white-space:pre;font-family:'Noto Sans CJK JP','IPAGothic',sans-serif;font-weight:300;font-size:19.3px;letter-spacing:0.54px;color:#000;width:160px;text-align:right;padding-right:4px;box-sizing:border-box;">10.85546404</div>
<div style="position:absolute;left:157px;top:338px;height:25px;line-height:28.2px;white-space:pre;font-family:'Noto Sans CJK JP','IPAGothic',sans-serif;font-weight:300;font-size:19.3px;letter-spacing:0.54px;color:#000;width:160px;text-align:right;padding-right:4px;box-sizing:border-box;">0.002718566</div>
<div style="position:absolute;left:157px;top:364px;height:25px;line-height:28.2px;white-space:pre;font-family:'Noto Sans CJK JP','IPAGothic',sans-serif;font-weight:300;font-size:19.3px;letter-spacing:0.54px;color:#000;width:160px;text-align:right;padding-right:4px;box-sizing:border-box;">−0.006789376</div>
<div style="position:absolute;left:40px;top:494px;height:25px;line-height:28.2px;white-space:pre;font-family:'Noto Sans CJK JP','IPAGothic',sans-serif;font-weight:300;font-size:19.3px;letter-spacing:0.54px;color:#000;width:116px;text-align:right;padding-right:4px;box-sizing:border-box;">2</div>
<div style="position:absolute;left:40px;top:520px;height:25px;line-height:26.6px;white-space:pre;font-family:'Noto Sans CJK JP',sans-serif;font-weight:300;font-size:21.33px;letter-spacing:0px;color:#000;padding-left:3px;">R8C2</div>
<div style="position:absolute;left:40px;top:546px;height:25px;line-height:26.6px;white-space:pre;font-family:'Noto Sans CJK JP',sans-serif;font-weight:300;font-size:21.33px;letter-spacing:0px;color:#000;padding-left:3px;">R9C2:R12C2</div>
<div style="position:absolute;left:40px;top:572px;height:25px;line-height:26.6px;white-space:pre;font-family:'Noto Sans CJK JP',sans-serif;font-weight:300;font-size:21.33px;letter-spacing:0px;color:#000;padding-left:3px;">R13C2:R16C2</div>
<div style="position:absolute;left:40px;top:598px;height:25px;line-height:26.6px;white-space:pre;font-family:'Noto Sans CJK JP',sans-serif;font-weight:300;font-size:21.33px;letter-spacing:0px;color:#000;padding-left:3px;">R8C4:R37C8</div>
<div style="position:absolute;left:40px;top:624px;height:25px;line-height:28.2px;white-space:pre;font-family:'Noto Sans CJK JP','IPAGothic',sans-serif;font-weight:300;font-size:19.3px;letter-spacing:0.54px;color:#000;width:116px;text-align:right;padding-right:4px;box-sizing:border-box;">0.00000001</div>
<div style="position:absolute;left:40px;top:650px;height:25px;line-height:28.2px;white-space:pre;font-family:'Noto Sans CJK JP','IPAGothic',sans-serif;font-weight:300;font-size:19.3px;letter-spacing:0.54px;color:#000;width:116px;text-align:right;padding-right:4px;box-sizing:border-box;">1</div>
<div style="position:absolute;left:414px;top:182px;height:25px;line-height:26.6px;white-space:pre;font-family:'Noto Sans CJK JP',sans-serif;font-weight:300;font-size:21.33px;letter-spacing:0px;color:#000;width:160px;text-align:center;">t</div>
<div style="position:absolute;left:575px;top:182px;height:25px;line-height:26.6px;white-space:pre;font-family:'Noto Sans CJK JP',sans-serif;font-weight:300;font-size:21.33px;letter-spacing:0px;color:#000;width:160px;text-align:center;">y1</div>
<div style="position:absolute;left:736px;top:182px;height:25px;line-height:26.6px;white-space:pre;font-family:'Noto Sans CJK JP',sans-serif;font-weight:300;font-size:21.33px;letter-spacing:0px;color:#000;width:160px;text-align:center;">y2</div>
<div style="position:absolute;left:897px;top:182px;height:25px;line-height:26.6px;white-space:pre;font-family:'Noto Sans CJK JP',sans-serif;font-weight:300;font-size:21.33px;letter-spacing:0px;color:#000;width:160px;text-align:center;">y'1</div>
<div style="position:absolute;left:1058px;top:182px;height:25px;line-height:26.6px;white-space:pre;font-family:'Noto Sans CJK JP',sans-serif;font-weight:300;font-size:21.33px;letter-spacing:0px;color:#000;width:160px;text-align:center;">y'2</div>
<div style="position:absolute;left:414px;top:208px;height:25px;line-height:28.2px;white-space:pre;font-family:'Noto Sans CJK JP','IPAGothic',sans-serif;font-weight:300;font-size:19.3px;letter-spacing:0.54px;color:#000;width:160px;text-align:right;padding-right:4px;box-sizing:border-box;">0</div>
<div style="position:absolute;left:575px;top:208px;height:25px;line-height:28.2px;white-space:pre;font-family:'Noto Sans CJK JP','IPAGothic',sans-serif;font-weight:300;font-size:19.3px;letter-spacing:0.54px;color:#000;width:160px;text-align:right;padding-right:4px;box-sizing:border-box;">1</div>
<div style="position:absolute;left:736px;top:208px;height:25px;line-height:28.2px;white-space:pre;font-family:'Noto Sans CJK JP','IPAGothic',sans-serif;font-weight:300;font-size:19.3px;letter-spacing:0.54px;color:#000;width:160px;text-align:right;padding-right:4px;box-sizing:border-box;">0</div>
<div style="position:absolute;left:897px;top:208px;height:25px;line-height:28.2px;white-space:pre;font-family:'Noto Sans CJK JP','IPAGothic',sans-serif;font-weight:300;font-size:19.3px;letter-spacing:0.54px;color:#000;width:160px;text-align:right;padding-right:4px;box-sizing:border-box;">0</div>
<div style="position:absolute;left:1058px;top:208px;height:25px;line-height:28.2px;white-space:pre;font-family:'Noto Sans CJK JP','IPAGothic',sans-serif;font-weight:300;font-size:19.3px;letter-spacing:0.54px;color:#000;width:160px;text-align:right;padding-right:4px;box-sizing:border-box;">1.732050808</div>
<div style="position:absolute;left:414px;top:234px;height:25px;line-height:28.2px;white-space:pre;font-family:'Noto Sans CJK JP','IPAGothic',sans-serif;font-weight:300;font-size:19.3px;letter-spacing:0.54px;color:#000;width:160px;text-align:right;padding-right:4px;box-sizing:border-box;">0.5</div>
<div style="position:absolute;left:575px;top:234px;height:25px;line-height:28.2px;white-space:pre;font-family:'Noto Sans CJK JP','IPAGothic',sans-serif;font-weight:300;font-size:19.3px;letter-spacing:0.54px;color:#000;width:160px;text-align:right;padding-right:4px;box-sizing:border-box;">0.889482392</div>
<div style="position:absolute;left:736px;top:234px;height:25px;line-height:28.2px;white-space:pre;font-family:'Noto Sans CJK JP','IPAGothic',sans-serif;font-weight:300;font-size:19.3px;letter-spacing:0.54px;color:#000;width:160px;text-align:right;padding-right:4px;box-sizing:border-box;">0.836509778</div>
<div style="position:absolute;left:897px;top:234px;height:25px;line-height:28.2px;white-space:pre;font-family:'Noto Sans CJK JP','IPAGothic',sans-serif;font-weight:300;font-size:19.3px;letter-spacing:0.54px;color:#000;width:160px;text-align:right;padding-right:4px;box-sizing:border-box;">−0.395721846</div>
<div style="position:absolute;left:1058px;top:234px;height:25px;line-height:28.2px;white-space:pre;font-family:'Noto Sans CJK JP','IPAGothic',sans-serif;font-weight:300;font-size:19.3px;letter-spacing:0.54px;color:#000;width:160px;text-align:right;padding-right:4px;box-sizing:border-box;">1.571053988</div>
<div style="position:absolute;left:414px;top:260px;height:25px;line-height:28.2px;white-space:pre;font-family:'Noto Sans CJK JP','IPAGothic',sans-serif;font-weight:300;font-size:19.3px;letter-spacing:0.54px;color:#000;width:160px;text-align:right;padding-right:4px;box-sizing:border-box;">1</div>
<div style="position:absolute;left:575px;top:260px;height:25px;line-height:28.2px;white-space:pre;font-family:'Noto Sans CJK JP','IPAGothic',sans-serif;font-weight:300;font-size:19.3px;letter-spacing:0.54px;color:#000;width:160px;text-align:right;padding-right:4px;box-sizing:border-box;">0.649912566</div>
<div style="position:absolute;left:736px;top:260px;height:25px;line-height:28.2px;white-space:pre;font-family:'Noto Sans CJK JP','IPAGothic',sans-serif;font-weight:300;font-size:19.3px;letter-spacing:0.54px;color:#000;width:160px;text-align:right;padding-right:4px;box-sizing:border-box;">1.571053988</div>
<div style="position:absolute;left:897px;top:260px;height:25px;line-height:28.2px;white-space:pre;font-family:'Noto Sans CJK JP','IPAGothic',sans-serif;font-weight:300;font-size:19.3px;letter-spacing:0.54px;color:#000;width:160px;text-align:right;padding-right:4px;box-sizing:border-box;">−0.537218463</div>
<div style="position:absolute;left:1058px;top:260px;height:25px;line-height:28.2px;white-space:pre;font-family:'Noto Sans CJK JP','IPAGothic',sans-serif;font-weight:300;font-size:19.3px;letter-spacing:0.54px;color:#000;width:160px;text-align:right;padding-right:4px;box-sizing:border-box;">1.371053988</div>
<div style="position:absolute;left:414px;top:286px;height:25px;line-height:28.2px;white-space:pre;font-family:'Noto Sans CJK JP','IPAGothic',sans-serif;font-weight:300;font-size:19.3px;letter-spacing:0.54px;color:#000;width:160px;text-align:right;padding-right:4px;box-sizing:border-box;">1.5</div>
<div style="position:absolute;left:575px;top:286px;height:25px;line-height:28.2px;white-space:pre;font-family:'Noto Sans CJK JP','IPAGothic',sans-serif;font-weight:300;font-size:19.3px;letter-spacing:0.54px;color:#000;width:160px;text-align:right;padding-right:4px;box-sizing:border-box;">0.372156523</div>
<div style="position:absolute;left:736px;top:286px;height:25px;line-height:28.2px;white-space:pre;font-family:'Noto Sans CJK JP','IPAGothic',sans-serif;font-weight:300;font-size:19.3px;letter-spacing:0.54px;color:#000;width:160px;text-align:right;padding-right:4px;box-sizing:border-box;">2.224775829</div>
<div style="position:absolute;left:897px;top:286px;height:25px;line-height:28.2px;white-space:pre;font-family:'Noto Sans CJK JP','IPAGothic',sans-serif;font-weight:300;font-size:19.3px;letter-spacing:0.54px;color:#000;width:160px;text-align:right;padding-right:4px;box-sizing:border-box;">−0.568412937</div>
<div style="position:absolute;left:1058px;top:286px;height:25px;line-height:28.2px;white-space:pre;font-family:'Noto Sans CJK JP','IPAGothic',sans-serif;font-weight:300;font-size:19.3px;letter-spacing:0.54px;color:#000;width:160px;text-align:right;padding-right:4px;box-sizing:border-box;">1.254775829</div>
<div style="position:absolute;left:414px;top:312px;height:25px;line-height:28.2px;white-space:pre;font-family:'Noto Sans CJK JP','IPAGothic',sans-serif;font-weight:300;font-size:19.3px;letter-spacing:0.54px;color:#000;width:160px;text-align:right;padding-right:4px;box-sizing:border-box;">2</div>
<div style="position:absolute;left:575px;top:312px;height:25px;line-height:28.2px;white-space:pre;font-family:'Noto Sans CJK JP','IPAGothic',sans-serif;font-weight:300;font-size:19.3px;letter-spacing:0.54px;color:#000;width:160px;text-align:right;padding-right:4px;box-sizing:border-box;">0.084941343</div>
<div style="position:absolute;left:736px;top:312px;height:25px;line-height:28.2px;white-space:pre;font-family:'Noto Sans CJK JP','IPAGothic',sans-serif;font-weight:300;font-size:19.3px;letter-spacing:0.54px;color:#000;width:160px;text-align:right;padding-right:4px;box-sizing:border-box;">2.82884336</div>
<div style="position:absolute;left:897px;top:312px;height:25px;line-height:28.2px;white-space:pre;font-family:'Noto Sans CJK JP','IPAGothic',sans-serif;font-weight:300;font-size:19.3px;letter-spacing:0.54px;color:#000;width:160px;text-align:right;padding-right:4px;box-sizing:border-box;">−0.575318462</div>
<div style="position:absolute;left:1058px;top:312px;height:25px;line-height:28.2px;white-space:pre;font-family:'Noto Sans CJK JP','IPAGothic',sans-serif;font-weight:300;font-size:19.3px;letter-spacing:0.54px;color:#000;width:160px;text-align:right;padding-right:4px;box-sizing:border-box;">1.17884336</div>
<div style="position:absolute;left:414px;top:338px;height:25px;line-height:28.2px;white-space:pre;font-family:'Noto Sans CJK JP','IPAGothic',sans-serif;font-weight:300;font-size:19.3px;letter-spacing:0.54px;color:#000;width:160px;text-align:right;padding-right:4px;box-sizing:border-box;">2.5</div>
<div style="position:absolute;left:575px;top:338px;height:25px;line-height:28.2px;white-space:pre;font-family:'Noto Sans CJK JP','IPAGothic',sans-serif;font-weight:300;font-size:19.3px;letter-spacing:0.54px;color:#000;width:160px;text-align:right;padding-right:4px;box-sizing:border-box;">−0.203592338</div>
<div style="position:absolute;left:736px;top:338px;height:25px;line-height:28.2px;white-space:pre;font-family:'Noto Sans CJK JP','IPAGothic',sans-serif;font-weight:300;font-size:19.3px;letter-spacing:0.54px;color:#000;width:160px;text-align:right;padding-right:4px;box-sizing:border-box;">3.401097476</div>
<div style="position:absolute;left:897px;top:338px;height:25px;line-height:28.2px;white-space:pre;font-family:'Noto Sans CJK JP','IPAGothic',sans-serif;font-weight:300;font-size:19.3px;letter-spacing:0.54px;color:#000;width:160px;text-align:right;padding-right:4px;box-sizing:border-box;">−0.574128364</div>
<div style="position:absolute;left:1058px;top:338px;height:25px;line-height:28.2px;white-space:pre;font-family:'Noto Sans CJK JP','IPAGothic',sans-serif;font-weight:300;font-size:19.3px;letter-spacing:0.54px;color:#000;width:160px;text-align:right;padding-right:4px;box-sizing:border-box;">1.121097476</div>
<div style="position:absolute;left:414px;top:364px;height:25px;line-height:28.2px;white-space:pre;font-family:'Noto Sans CJK JP','IPAGothic',sans-serif;font-weight:300;font-size:19.3px;letter-spacing:0.54px;color:#000;width:160px;text-align:right;padding-right:4px;box-sizing:border-box;">3</div>
<div style="position:absolute;left:575px;top:364px;height:25px;line-height:28.2px;white-space:pre;font-family:'Noto Sans CJK JP','IPAGothic',sans-serif;font-weight:300;font-size:19.3px;letter-spacing:0.54px;color:#000;width:160px;text-align:right;padding-right:4px;box-sizing:border-box;">−0.490961912</div>
<div style="position:absolute;left:736px;top:364px;height:25px;line-height:28.2px;white-space:pre;font-family:'Noto Sans CJK JP','IPAGothic',sans-serif;font-weight:300;font-size:19.3px;letter-spacing:0.54px;color:#000;width:160px;text-align:right;padding-right:4px;box-sizing:border-box;">3.951541456</div>
<div style="position:absolute;left:897px;top:364px;height:25px;line-height:28.2px;white-space:pre;font-family:'Noto Sans CJK JP','IPAGothic',sans-serif;font-weight:300;font-size:19.3px;letter-spacing:0.54px;color:#000;width:160px;text-align:right;padding-right:4px;box-sizing:border-box;">−0.570291837</div>
<div style="position:absolute;left:1058px;top:364px;height:25px;line-height:28.2px;white-space:pre;font-family:'Noto Sans CJK JP','IPAGothic',sans-serif;font-weight:300;font-size:19.3px;letter-spacing:0.54px;color:#000;width:160px;text-align:right;padding-right:4px;box-sizing:border-box;">1.081541456</div>
<div style="position:absolute;left:414px;top:390px;height:25px;line-height:28.2px;white-space:pre;font-family:'Noto Sans CJK JP','IPAGothic',sans-serif;font-weight:300;font-size:19.3px;letter-spacing:0.54px;color:#000;width:160px;text-align:right;padding-right:4px;box-sizing:border-box;">3.5</div>
<div style="position:absolute;left:575px;top:390px;height:25px;line-height:28.2px;white-space:pre;font-family:'Noto Sans CJK JP','IPAGothic',sans-serif;font-weight:300;font-size:19.3px;letter-spacing:0.54px;color:#000;width:160px;text-align:right;padding-right:4px;box-sizing:border-box;">−0.776430495</div>
<div style="position:absolute;left:736px;top:390px;height:25px;line-height:28.2px;white-space:pre;font-family:'Noto Sans CJK JP','IPAGothic',sans-serif;font-weight:300;font-size:19.3px;letter-spacing:0.54px;color:#000;width:160px;text-align:right;padding-right:4px;box-sizing:border-box;">4.486167998</div>
<div style="position:absolute;left:897px;top:390px;height:25px;line-height:28.2px;white-space:pre;font-family:'Noto Sans CJK JP','IPAGothic',sans-serif;font-weight:300;font-size:19.3px;letter-spacing:0.54px;color:#000;width:160px;text-align:right;padding-right:4px;box-sizing:border-box;">−0.565718293</div>
<div style="position:absolute;left:1058px;top:390px;height:25px;line-height:28.2px;white-space:pre;font-family:'Noto Sans CJK JP','IPAGothic',sans-serif;font-weight:300;font-size:19.3px;letter-spacing:0.54px;color:#000;width:160px;text-align:right;padding-right:4px;box-sizing:border-box;">1.056167998</div>
<div style="position:absolute;left:414px;top:416px;height:25px;line-height:28.2px;white-space:pre;font-family:'Noto Sans CJK JP','IPAGothic',sans-serif;font-weight:300;font-size:19.3px;letter-spacing:0.54px;color:#000;width:160px;text-align:right;padding-right:4px;box-sizing:border-box;">4</div>
<div style="position:absolute;left:575px;top:416px;height:25px;line-height:28.2px;white-space:pre;font-family:'Noto Sans CJK JP','IPAGothic',sans-serif;font-weight:300;font-size:19.3px;letter-spacing:0.54px;color:#000;width:160px;text-align:right;padding-right:4px;box-sizing:border-box;">−1.05985778</div>
<div style="position:absolute;left:736px;top:416px;height:25px;line-height:28.2px;white-space:pre;font-family:'Noto Sans CJK JP','IPAGothic',sans-serif;font-weight:300;font-size:19.3px;letter-spacing:0.54px;color:#000;width:160px;text-align:right;padding-right:4px;box-sizing:border-box;">5.008811229</div>
<div style="position:absolute;left:897px;top:416px;height:25px;line-height:28.2px;white-space:pre;font-family:'Noto Sans CJK JP','IPAGothic',sans-serif;font-weight:300;font-size:19.3px;letter-spacing:0.54px;color:#000;width:160px;text-align:right;padding-right:4px;box-sizing:border-box;">−0.561028374</div>
<div style="position:absolute;left:1058px;top:416px;height:25px;line-height:28.2px;white-space:pre;font-family:'Noto Sans CJK JP','IPAGothic',sans-serif;font-weight:300;font-size:19.3px;letter-spacing:0.54px;color:#000;width:160px;text-align:right;padding-right:4px;box-sizing:border-box;">1.038811229</div>
<div style="position:absolute;left:414px;top:442px;height:25px;line-height:28.2px;white-space:pre;font-family:'Noto Sans CJK JP','IPAGothic',sans-serif;font-weight:300;font-size:19.3px;letter-spacing:0.54px;color:#000;width:160px;text-align:right;padding-right:4px;box-sizing:border-box;">4.5</div>
<div style="position:absolute;left:575px;top:442px;height:25px;line-height:28.2px;white-space:pre;font-family:'Noto Sans CJK JP','IPAGothic',sans-serif;font-weight:300;font-size:19.3px;letter-spacing:0.54px;color:#000;width:160px;text-align:right;padding-right:4px;box-sizing:border-box;">−1.341315722</div>
<div style="position:absolute;left:736px;top:442px;height:25px;line-height:28.2px;white-space:pre;font-family:'Noto Sans CJK JP','IPAGothic',sans-serif;font-weight:300;font-size:19.3px;letter-spacing:0.54px;color:#000;width:160px;text-align:right;padding-right:4px;box-sizing:border-box;">5.52206193</div>
<div style="position:absolute;left:897px;top:442px;height:25px;line-height:28.2px;white-space:pre;font-family:'Noto Sans CJK JP','IPAGothic',sans-serif;font-weight:300;font-size:19.3px;letter-spacing:0.54px;color:#000;width:160px;text-align:right;padding-right:4px;box-sizing:border-box;">−0.564718293</div>
<div style="position:absolute;left:1058px;top:442px;height:25px;line-height:28.2px;white-space:pre;font-family:'Noto Sans CJK JP','IPAGothic',sans-serif;font-weight:300;font-size:19.3px;letter-spacing:0.54px;color:#000;width:160px;text-align:right;padding-right:4px;box-sizing:border-box;">1.02206193</div>
<div style="position:absolute;left:414px;top:468px;height:25px;line-height:28.2px;white-space:pre;font-family:'Noto Sans CJK JP','IPAGothic',sans-serif;font-weight:300;font-size:19.3px;letter-spacing:0.54px;color:#000;width:160px;text-align:right;padding-right:4px;box-sizing:border-box;">5</div>
<div style="position:absolute;left:575px;top:468px;height:25px;line-height:28.2px;white-space:pre;font-family:'Noto Sans CJK JP','IPAGothic',sans-serif;font-weight:300;font-size:19.3px;letter-spacing:0.54px;color:#000;width:160px;text-align:right;padding-right:4px;box-sizing:border-box;">−1.620947365</div>
<div style="position:absolute;left:736px;top:468px;height:25px;line-height:28.2px;white-space:pre;font-family:'Noto Sans CJK JP','IPAGothic',sans-serif;font-weight:300;font-size:19.3px;letter-spacing:0.54px;color:#000;width:160px;text-align:right;padding-right:4px;box-sizing:border-box;">6.027749809</div>
<div style="position:absolute;left:897px;top:468px;height:25px;line-height:28.2px;white-space:pre;font-family:'Noto Sans CJK JP','IPAGothic',sans-serif;font-weight:300;font-size:19.3px;letter-spacing:0.54px;color:#000;width:160px;text-align:right;padding-right:4px;box-sizing:border-box;">−0.557382916</div>
<div style="position:absolute;left:1058px;top:468px;height:25px;line-height:28.2px;white-space:pre;font-family:'Noto Sans CJK JP','IPAGothic',sans-serif;font-weight:300;font-size:19.3px;letter-spacing:0.54px;color:#000;width:160px;text-align:right;padding-right:4px;box-sizing:border-box;">1.007749809</div>
<div style="position:absolute;left:414px;top:494px;height:25px;line-height:28.2px;white-space:pre;font-family:'Noto Sans CJK JP','IPAGothic',sans-serif;font-weight:300;font-size:19.3px;letter-spacing:0.54px;color:#000;width:160px;text-align:right;padding-right:4px;box-sizing:border-box;">5.5</div>
<div style="position:absolute;left:575px;top:494px;height:25px;line-height:28.2px;white-space:pre;font-family:'Noto Sans CJK JP','IPAGothic',sans-serif;font-weight:300;font-size:19.3px;letter-spacing:0.54px;color:#000;width:160px;text-align:right;padding-right:4px;box-sizing:border-box;">−1.898912146</div>
<div style="position:absolute;left:736px;top:494px;height:25px;line-height:28.2px;white-space:pre;font-family:'Noto Sans CJK JP','IPAGothic',sans-serif;font-weight:300;font-size:19.3px;letter-spacing:0.54px;color:#000;width:160px;text-align:right;padding-right:4px;box-sizing:border-box;">6.527214303</div>
<div style="position:absolute;left:897px;top:494px;height:25px;line-height:28.2px;white-space:pre;font-family:'Noto Sans CJK JP','IPAGothic',sans-serif;font-weight:300;font-size:19.3px;letter-spacing:0.54px;color:#000;width:160px;text-align:right;padding-right:4px;box-sizing:border-box;">−0.554291837</div>
<div style="position:absolute;left:1058px;top:494px;height:25px;line-height:28.2px;white-space:pre;font-family:'Noto Sans CJK JP','IPAGothic',sans-serif;font-weight:300;font-size:19.3px;letter-spacing:0.54px;color:#000;width:160px;text-align:right;padding-right:4px;box-sizing:border-box;">0.997214303</div>
<div style="position:absolute;left:414px;top:520px;height:25px;line-height:28.2px;white-space:pre;font-family:'Noto Sans CJK JP','IPAGothic',sans-serif;font-weight:300;font-size:19.3px;letter-spacing:0.54px;color:#000;width:160px;text-align:right;padding-right:4px;box-sizing:border-box;">6</div>
<div style="position:absolute;left:575px;top:520px;height:25px;line-height:28.2px;white-space:pre;font-family:'Noto Sans CJK JP','IPAGothic',sans-serif;font-weight:300;font-size:19.3px;letter-spacing:0.54px;color:#000;width:160px;text-align:right;padding-right:4px;box-sizing:border-box;">−2.175364573</div>
<div style="position:absolute;left:736px;top:520px;height:25px;line-height:28.2px;white-space:pre;font-family:'Noto Sans CJK JP','IPAGothic',sans-serif;font-weight:300;font-size:19.3px;letter-spacing:0.54px;color:#000;width:160px;text-align:right;padding-right:4px;box-sizing:border-box;">7.021465312</div>
<div style="position:absolute;left:897px;top:520px;height:25px;line-height:28.2px;white-space:pre;font-family:'Noto Sans CJK JP','IPAGothic',sans-serif;font-weight:300;font-size:19.3px;letter-spacing:0.54px;color:#000;width:160px;text-align:right;padding-right:4px;box-sizing:border-box;">−0.551382746</div>
<div style="position:absolute;left:1058px;top:520px;height:25px;line-height:28.2px;white-space:pre;font-family:'Noto Sans CJK JP','IPAGothic',sans-serif;font-weight:300;font-size:19.3px;letter-spacing:0.54px;color:#000;width:160px;text-align:right;padding-right:4px;box-sizing:border-box;">0.981465312</div>
<div style="position:absolute;left:414px;top:546px;height:25px;line-height:28.2px;white-space:pre;font-family:'Noto Sans CJK JP','IPAGothic',sans-serif;font-weight:300;font-size:19.3px;letter-spacing:0.54px;color:#000;width:160px;text-align:right;padding-right:4px;box-sizing:border-box;">6.5</div>
<div style="position:absolute;left:575px;top:546px;height:25px;line-height:28.2px;white-space:pre;font-family:'Noto Sans CJK JP','IPAGothic',sans-serif;font-weight:300;font-size:19.3px;letter-spacing:0.54px;color:#000;width:160px;text-align:right;padding-right:4px;box-sizing:border-box;">−2.450446509</div>
<div style="position:absolute;left:736px;top:546px;height:25px;line-height:28.2px;white-space:pre;font-family:'Noto Sans CJK JP','IPAGothic',sans-serif;font-weight:300;font-size:19.3px;letter-spacing:0.54px;color:#000;width:160px;text-align:right;padding-right:4px;box-sizing:border-box;">7.511283236</div>
<div style="position:absolute;left:897px;top:546px;height:25px;line-height:28.2px;white-space:pre;font-family:'Noto Sans CJK JP','IPAGothic',sans-serif;font-weight:300;font-size:19.3px;letter-spacing:0.54px;color:#000;width:160px;text-align:right;padding-right:4px;box-sizing:border-box;">−0.548719283</div>
<div style="position:absolute;left:1058px;top:546px;height:25px;line-height:28.2px;white-space:pre;font-family:'Noto Sans CJK JP','IPAGothic',sans-serif;font-weight:300;font-size:19.3px;letter-spacing:0.54px;color:#000;width:160px;text-align:right;padding-right:4px;box-sizing:border-box;">0.971283236</div>
<div style="position:absolute;left:414px;top:572px;height:25px;line-height:28.2px;white-space:pre;font-family:'Noto Sans CJK JP','IPAGothic',sans-serif;font-weight:300;font-size:19.3px;letter-spacing:0.54px;color:#000;width:160px;text-align:right;padding-right:4px;box-sizing:border-box;">7</div>
<div style="position:absolute;left:575px;top:572px;height:25px;line-height:28.2px;white-space:pre;font-family:'Noto Sans CJK JP','IPAGothic',sans-serif;font-weight:300;font-size:19.3px;letter-spacing:0.54px;color:#000;width:160px;text-align:right;padding-right:4px;box-sizing:border-box;">−2.724285137</div>
<div style="position:absolute;left:736px;top:572px;height:25px;line-height:28.2px;white-space:pre;font-family:'Noto Sans CJK JP','IPAGothic',sans-serif;font-weight:300;font-size:19.3px;letter-spacing:0.54px;color:#000;width:160px;text-align:right;padding-right:4px;box-sizing:border-box;">7.997283775</div>
<div style="position:absolute;left:897px;top:572px;height:25px;line-height:28.2px;white-space:pre;font-family:'Noto Sans CJK JP','IPAGothic',sans-serif;font-weight:300;font-size:19.3px;letter-spacing:0.54px;color:#000;width:160px;text-align:right;padding-right:4px;box-sizing:border-box;">−0.546281937</div>
<div style="position:absolute;left:1058px;top:572px;height:25px;line-height:28.2px;white-space:pre;font-family:'Noto Sans CJK JP','IPAGothic',sans-serif;font-weight:300;font-size:19.3px;letter-spacing:0.54px;color:#000;width:160px;text-align:right;padding-right:4px;box-sizing:border-box;">0.967283775</div>
<div style="position:absolute;left:414px;top:598px;height:25px;line-height:28.2px;white-space:pre;font-family:'Noto Sans CJK JP','IPAGothic',sans-serif;font-weight:300;font-size:19.3px;letter-spacing:0.54px;color:#000;width:160px;text-align:right;padding-right:4px;box-sizing:border-box;">7.5</div>
<div style="position:absolute;left:575px;top:598px;height:25px;line-height:28.2px;white-space:pre;font-family:'Noto Sans CJK JP','IPAGothic',sans-serif;font-weight:300;font-size:19.3px;letter-spacing:0.54px;color:#000;width:160px;text-align:right;padding-right:4px;box-sizing:border-box;">−2.996993276</div>
<div style="position:absolute;left:736px;top:598px;height:25px;line-height:28.2px;white-space:pre;font-family:'Noto Sans CJK JP','IPAGothic',sans-serif;font-weight:300;font-size:19.3px;letter-spacing:0.54px;color:#000;width:160px;text-align:right;padding-right:4px;box-sizing:border-box;">8.479961384</div>
<div style="position:absolute;left:897px;top:598px;height:25px;line-height:28.2px;white-space:pre;font-family:'Noto Sans CJK JP','IPAGothic',sans-serif;font-weight:300;font-size:19.3px;letter-spacing:0.54px;color:#000;width:160px;text-align:right;padding-right:4px;box-sizing:border-box;">−0.544018273</div>
<div style="position:absolute;left:1058px;top:598px;height:25px;line-height:28.2px;white-space:pre;font-family:'Noto Sans CJK JP','IPAGothic',sans-serif;font-weight:300;font-size:19.3px;letter-spacing:0.54px;color:#000;width:160px;text-align:right;padding-right:4px;box-sizing:border-box;">0.959961384</div>
<div style="position:absolute;left:414px;top:624px;height:25px;line-height:28.2px;white-space:pre;font-family:'Noto Sans CJK JP','IPAGothic',sans-serif;font-weight:300;font-size:19.3px;letter-spacing:0.54px;color:#000;width:160px;text-align:right;padding-right:4px;box-sizing:border-box;">8</div>
<div style="position:absolute;left:575px;top:624px;height:25px;line-height:28.2px;white-space:pre;font-family:'Noto Sans CJK JP','IPAGothic',sans-serif;font-weight:300;font-size:19.3px;letter-spacing:0.54px;color:#000;width:160px;text-align:right;padding-right:4px;box-sizing:border-box;">−3.2686706</div>
<div style="position:absolute;left:736px;top:624px;height:25px;line-height:28.2px;white-space:pre;font-family:'Noto Sans CJK JP','IPAGothic',sans-serif;font-weight:300;font-size:19.3px;letter-spacing:0.54px;color:#000;width:160px;text-align:right;padding-right:4px;box-sizing:border-box;">8.959719266</div>
<div style="position:absolute;left:897px;top:624px;height:25px;line-height:28.2px;white-space:pre;font-family:'Noto Sans CJK JP','IPAGothic',sans-serif;font-weight:300;font-size:19.3px;letter-spacing:0.54px;color:#000;width:160px;text-align:right;padding-right:4px;box-sizing:border-box;">−0.541928374</div>
<div style="position:absolute;left:1058px;top:624px;height:25px;line-height:28.2px;white-space:pre;font-family:'Noto Sans CJK JP','IPAGothic',sans-serif;font-weight:300;font-size:19.3px;letter-spacing:0.54px;color:#000;width:160px;text-align:right;padding-right:4px;box-sizing:border-box;">0.953719266</div>
<div style="position:absolute;left:414px;top:650px;height:25px;line-height:28.2px;white-space:pre;font-family:'Noto Sans CJK JP','IPAGothic',sans-serif;font-weight:300;font-size:19.3px;letter-spacing:0.54px;color:#000;width:160px;text-align:right;padding-right:4px;box-sizing:border-box;">8.5</div>
<div style="position:absolute;left:575px;top:650px;height:25px;line-height:28.2px;white-space:pre;font-family:'Noto Sans CJK JP','IPAGothic',sans-serif;font-weight:300;font-size:19.3px;letter-spacing:0.54px;color:#000;width:160px;text-align:right;padding-right:4px;box-sizing:border-box;">−3.539405119</div>
<div style="position:absolute;left:736px;top:650px;height:25px;line-height:28.2px;white-space:pre;font-family:'Noto Sans CJK JP','IPAGothic',sans-serif;font-weight:300;font-size:19.3px;letter-spacing:0.54px;color:#000;width:160px;text-align:right;padding-right:4px;box-sizing:border-box;">9.436890628</div>
<div style="position:absolute;left:897px;top:650px;height:25px;line-height:28.2px;white-space:pre;font-family:'Noto Sans CJK JP','IPAGothic',sans-serif;font-weight:300;font-size:19.3px;letter-spacing:0.54px;color:#000;width:160px;text-align:right;padding-right:4px;box-sizing:border-box;">−0.540018273</div>
<div style="position:absolute;left:1058px;top:650px;height:25px;line-height:28.2px;white-space:pre;font-family:'Noto Sans CJK JP','IPAGothic',sans-serif;font-weight:300;font-size:19.3px;letter-spacing:0.54px;color:#000;width:160px;text-align:right;padding-right:4px;box-sizing:border-box;">0.946890628</div>
<div style="position:absolute;left:414px;top:676px;height:25px;line-height:28.2px;white-space:pre;font-family:'Noto Sans CJK JP','IPAGothic',sans-serif;font-weight:300;font-size:19.3px;letter-spacing:0.54px;color:#000;width:160px;text-align:right;padding-right:4px;box-sizing:border-box;">9</div>
<div style="position:absolute;left:575px;top:676px;height:25px;line-height:28.2px;white-space:pre;font-family:'Noto Sans CJK JP','IPAGothic',sans-serif;font-weight:300;font-size:19.3px;letter-spacing:0.54px;color:#000;width:160px;text-align:right;padding-right:4px;box-sizing:border-box;">−3.809274639</div>
<div style="position:absolute;left:736px;top:676px;height:25px;line-height:28.2px;white-space:pre;font-family:'Noto Sans CJK JP','IPAGothic',sans-serif;font-weight:300;font-size:19.3px;letter-spacing:0.54px;color:#000;width:160px;text-align:right;padding-right:4px;box-sizing:border-box;">9.911754071</div>
<div style="position:absolute;left:897px;top:676px;height:25px;line-height:28.2px;white-space:pre;font-family:'Noto Sans CJK JP','IPAGothic',sans-serif;font-weight:300;font-size:19.3px;letter-spacing:0.54px;color:#000;width:160px;text-align:right;padding-right:4px;box-sizing:border-box;">−0.538192837</div>
<div style="position:absolute;left:1058px;top:676px;height:25px;line-height:28.2px;white-space:pre;font-family:'Noto Sans CJK JP','IPAGothic',sans-serif;font-weight:300;font-size:19.3px;letter-spacing:0.54px;color:#000;width:160px;text-align:right;padding-right:4px;box-sizing:border-box;">0.941754071</div>
<div style="position:absolute;left:414px;top:702px;height:25px;line-height:28.2px;white-space:pre;font-family:'Noto Sans CJK JP','IPAGothic',sans-serif;font-weight:300;font-size:19.3px;letter-spacing:0.54px;color:#000;width:160px;text-align:right;padding-right:4px;box-sizing:border-box;">9.5</div>
<div style="position:absolute;left:575px;top:702px;height:25px;line-height:28.2px;white-space:pre;font-family:'Noto Sans CJK JP','IPAGothic',sans-serif;font-weight:300;font-size:19.3px;letter-spacing:0.54px;color:#000;width:160px;text-align:right;padding-right:4px;box-sizing:border-box;">−4.078348115</div>
<div style="position:absolute;left:736px;top:702px;height:25px;line-height:28.2px;white-space:pre;font-family:'Noto Sans CJK JP','IPAGothic',sans-serif;font-weight:300;font-size:19.3px;letter-spacing:0.54px;color:#000;width:160px;text-align:right;padding-right:4px;box-sizing:border-box;">10.38454498</div>
<div style="position:absolute;left:897px;top:702px;height:25px;line-height:28.2px;white-space:pre;font-family:'Noto Sans CJK JP','IPAGothic',sans-serif;font-weight:300;font-size:19.3px;letter-spacing:0.54px;color:#000;width:160px;text-align:right;padding-right:4px;box-sizing:border-box;">−0.536518273</div>
<div style="position:absolute;left:1058px;top:702px;height:25px;line-height:28.2px;white-space:pre;font-family:'Noto Sans CJK JP','IPAGothic',sans-serif;font-weight:300;font-size:19.3px;letter-spacing:0.54px;color:#000;width:160px;text-align:right;padding-right:4px;box-sizing:border-box;">0.93854498</div>
<div style="position:absolute;left:414px;top:728px;height:25px;line-height:28.2px;white-space:pre;font-family:'Noto Sans CJK JP','IPAGothic',sans-serif;font-weight:300;font-size:19.3px;letter-spacing:0.54px;color:#000;width:160px;text-align:right;padding-right:4px;box-sizing:border-box;">10</div>
<div style="position:absolute;left:575px;top:728px;height:25px;line-height:28.2px;white-space:pre;font-family:'Noto Sans CJK JP','IPAGothic',sans-serif;font-weight:300;font-size:19.3px;letter-spacing:0.54px;color:#000;width:160px;text-align:right;padding-right:4px;box-sizing:border-box;">−4.346686828</div>
<div style="position:absolute;left:736px;top:728px;height:25px;line-height:28.2px;white-space:pre;font-family:'Noto Sans CJK JP','IPAGothic',sans-serif;font-weight:300;font-size:19.3px;letter-spacing:0.54px;color:#000;width:160px;text-align:right;padding-right:4px;box-sizing:border-box;">10.85546404</div>
<div style="position:absolute;left:897px;top:728px;height:25px;line-height:28.2px;white-space:pre;font-family:'Noto Sans CJK JP','IPAGothic',sans-serif;font-weight:300;font-size:19.3px;letter-spacing:0.54px;color:#000;width:160px;text-align:right;padding-right:4px;box-sizing:border-box;">−0.534918273</div>
<div style="position:absolute;left:1058px;top:728px;height:25px;line-height:28.2px;white-space:pre;font-family:'Noto Sans CJK JP','IPAGothic',sans-serif;font-weight:300;font-size:19.3px;letter-spacing:0.54px;color:#000;width:160px;text-align:right;padding-right:4px;box-sizing:border-box;">0.93546404</div>
<span style="position:absolute;white-space:pre;left:42px;top:23.65px;height:30px;line-height:30px;font-family:'Noto Sans CJK JP',sans-serif;font-size:20.5px;color:#000;font-weight:500;letter-spacing:2.379px;">2階常微分方程式の初期値問題</span>
<span style="position:absolute;white-space:pre;left:42px;top:76.80px;height:30px;line-height:30px;font-family:'Noto Sans CJK JP',sans-serif;font-size:21.33px;color:#000;font-weight:300;letter-spacing:0.252px;">d2y1/dt2 = −y1/r, d2y2/dt2 = −y2/r, r = (y1^2 + y2^2)^(3/2)</span>
<span style="position:absolute;white-space:pre;left:42px;top:101.61px;height:30px;line-height:30px;font-family:'Noto Sans CJK JP',sans-serif;font-size:21.33px;color:#000;font-weight:300;letter-spacing:0.435px;">t = 0 で y1 = 1, y2 = 0, dy1/dt = 0, dy2/dt = sqrt(3)</span>
<span style="position:absolute;white-space:pre;left:45px;top:153.61px;height:30px;line-height:30px;font-family:'Noto Sans CJK JP',sans-serif;font-size:21.33px;color:#000;font-weight:300;letter-spacing:0.357px;">微分方程式の定義</span>
<span style="position:absolute;white-space:pre;left:420px;top:153.61px;height:30px;line-height:30px;font-family:'Noto Sans CJK JP',sans-serif;font-size:21.33px;color:#000;font-weight:300;letter-spacing:0.135px;">初期値および計算値の出力領域</span>
<span style="position:absolute;white-space:pre;left:44.5px;top:465.61px;height:30px;line-height:30px;font-family:'Noto Sans CJK JP',sans-serif;font-size:21.33px;color:#000;font-weight:300;letter-spacing:-2.167px;">パラメータ保存</span>
<div style="position:absolute;left:38px;top:24px;width:121px;height:29px;border:2px solid #107c41;box-sizing:border-box;"></div>
<div style="position:absolute;left:152px;top:47px;width:8px;height:8px;background:#107c41;border:1px solid #fff;box-sizing:border-box;"></div>
</div>
<div style="position:absolute;left:975px;top:140px;width:753px;height:838px;background:#f0f0f0;border-radius:9px;box-shadow:0 0 0 1.3px #a0a0a0,0 22px 58px rgba(0,0,0,.45),0 3px 18px rgba(0,0,0,.13);overflow:hidden">
<div style="position:absolute;left:0;top:0;width:100%;height:44px;background:#f3f3f3"></div></div>
<span style="position:absolute;white-space:pre;left:987px;top:147.03px;height:30px;line-height:30px;font-family:'Liberation Sans','Noto Sans CJK JP',sans-serif;font-size:17.8px;color:#111;font-weight:normal;transform:scaleX(0.9977);transform-origin:0 50%;">2階常微分方程式の初期値問題</span>
<span style="position:absolute;white-space:pre;left:1618.5px;top:147.00px;height:30px;line-height:30px;font-family:'Liberation Sans','Noto Sans CJK JP',sans-serif;font-size:20px;color:#222;font-weight:normal;transform:scaleX(0.8090);transform-origin:0 50%;">?</span>
<svg style="position:absolute;left:1685px;top:153px" width="17" height="17" viewBox="0 0 17 17" fill="none" stroke="#222" stroke-width="1.400"><path d="M1 1l15 15M16 1l-15 15"/></svg>
<div style="position:absolute;left:998px;top:207px;width:704px;height:581.5px;border:1px solid #dcdcdc;box-sizing:border-box;"></div>
<div style="position:absolute;left:1004px;top:198px;width:74px;height:20px;background:#f0f0f0;"></div>
<span style="position:absolute;white-space:pre;left:1007px;top:193.25px;height:30px;line-height:30px;font-family:'DejaVu Sans','Noto Sans CJK JP',sans-serif;font-size:18.5px;color:#000;font-weight:normal;transform:scaleX(0.7395);transform-origin:0 50%;">パラメータ</span>
<span style="position:absolute;white-space:pre;left:1020px;top:240.53px;height:30px;line-height:30px;font-family:'DejaVu Sans','Noto Sans CJK JP',sans-serif;font-size:17.5px;color:#000;font-weight:normal;transform:scaleX(1.0269);transform-origin:0 50%;">従属変数(yi)の数 <u>N</u> (N &gt; 0) :</span>
<span style="position:absolute;white-space:pre;left:1020px;top:311.02px;height:30px;line-height:30px;font-family:'DejaVu Sans','Noto Sans CJK JP',sans-serif;font-size:17.5px;color:#000;font-weight:normal;transform:scaleX(1.0146);transform-origin:0 50%;">独立変数(t)セル(<u>V</u>) :</span>
<span style="position:absolute;white-space:pre;left:1020px;top:386.02px;height:30px;line-height:30px;font-family:'DejaVu Sans','Noto Sans CJK JP',sans-serif;font-size:17.5px;color:#000;font-weight:normal;transform:scaleX(1.0161);transform-origin:0 50%;">従属変数(yi)セル範囲(<u>Y</u>) :</span>
<span style="position:absolute;white-space:pre;left:1020px;top:458.02px;height:30px;line-height:30px;font-family:'DejaVu Sans','Noto Sans CJK JP',sans-serif;font-size:17.5px;color:#000;font-weight:normal;transform:scaleX(1.0204);transform-origin:0 50%;">2階微分式(d2yi/dt2)セル範囲(<u>D</u>) :</span>
<span style="position:absolute;white-space:pre;left:1020px;top:530.52px;height:30px;line-height:30px;font-family:'DejaVu Sans','Noto Sans CJK JP',sans-serif;font-size:17.5px;color:#000;font-weight:normal;transform:scaleX(0.9954);transform-origin:0 50%;">(*) 初期値および出力セル範囲(<u>R</u>) :</span>
<span style="position:absolute;white-space:pre;left:1020px;top:596.02px;height:30px;line-height:30px;font-family:'DejaVu Sans','Noto Sans CJK JP',sans-serif;font-size:17.5px;color:#000;font-weight:normal;transform:scaleX(1.0536);transform-origin:0 50%;">計算精度(<u>T</u>) :</span>
<span style="position:absolute;white-space:pre;left:1020px;top:668.02px;height:30px;line-height:30px;font-family:'DejaVu Sans','Noto Sans CJK JP',sans-serif;font-size:17.5px;color:#000;font-weight:normal;transform:scaleX(0.9101);transform-origin:0 50%;">使用プログラム(<u>P</u>) :</span>
<div style="position:absolute;left:1340px;top:233px;width:340px;height:35px;background:#fff;border:1px solid #9a9aa0;box-sizing:border-box;"></div>
<span style="position:absolute;left:1345.500px;top:234.0px;line-height:30px;font-family:'DejaVu Sans','Noto Sans CJK JP',sans-serif;font-size:17px;color:#000;white-space:pre">2</span>
<div style="position:absolute;left:1340px;top:308px;width:340px;height:35px;background:#fff;border:1px solid #9a9aa0;box-sizing:border-box;"></div>
<span style="position:absolute;left:1345.500px;top:309.0px;line-height:30px;font-family:'DejaVu Sans','Noto Sans CJK JP',sans-serif;font-size:17px;color:#000;white-space:pre">$B$8</span>
<div style="position:absolute;left:1647px;top:309px;width:32px;height:33px;background:#fdfdfd;border:1px solid #c8c8c8;border-radius:4px;box-sizing:border-box;"></div>
<svg style="position:absolute;left:1655px;top:315.5px" width="16" height="20" viewBox="0 0 16 20" fill="#000"><path d="M8 1l-5.500 7h4v6.500h3v-6.500h4zM2.500 17h11v1.500h-11z"/></svg>
<div style="position:absolute;left:1340px;top:380px;width:340px;height:35px;background:#fff;border:1px solid #9a9aa0;box-sizing:border-box;"></div>
<span style="position:absolute;left:1345.500px;top:381.0px;line-height:30px;font-family:'DejaVu Sans','Noto Sans CJK JP',sans-serif;font-size:17px;color:#000;white-space:pre">$B$9:$B$12</span>
<div style="position:absolute;left:1647px;top:381px;width:32px;height:33px;background:#fdfdfd;border:1px solid #c8c8c8;border-radius:4px;box-sizing:border-box;"></div>
<svg style="position:absolute;left:1655px;top:387.5px" width="16" height="20" viewBox="0 0 16 20" fill="#000"><path d="M8 1l-5.500 7h4v6.500h3v-6.500h4zM2.500 17h11v1.500h-11z"/></svg>
<div style="position:absolute;left:1340px;top:451px;width:340px;height:35px;background:#fff;border:1px solid #9a9aa0;box-sizing:border-box;"></div>
<span style="position:absolute;left:1345.500px;top:452.0px;line-height:30px;font-family:'DejaVu Sans','Noto Sans CJK JP',sans-serif;font-size:17px;color:#000;white-space:pre">$B$13:$B$16</span>
<div style="position:absolute;left:1647px;top:452px;width:32px;height:33px;background:#fdfdfd;border:1px solid #c8c8c8;border-radius:4px;box-sizing:border-box;"></div>
<svg style="position:absolute;left:1655px;top:458.5px" width="16" height="20" viewBox="0 0 16 20" fill="#000"><path d="M8 1l-5.500 7h4v6.500h3v-6.500h4zM2.500 17h11v1.500h-11z"/></svg>
<div style="position:absolute;left:1340px;top:526px;width:340px;height:35px;background:#fff;border:1px solid #9a9aa0;box-sizing:border-box;"></div>
<span style="position:absolute;left:1345.500px;top:527.0px;line-height:30px;font-family:'DejaVu Sans','Noto Sans CJK JP',sans-serif;font-size:17px;color:#000;white-space:pre">$D$8:$H$37</span>
<div style="position:absolute;left:1647px;top:527px;width:32px;height:33px;background:#fdfdfd;border:1px solid #c8c8c8;border-radius:4px;box-sizing:border-box;"></div>
<svg style="position:absolute;left:1655px;top:533.5px" width="16" height="20" viewBox="0 0 16 20" fill="#000"><path d="M8 1l-5.500 7h4v6.500h3v-6.500h4zM2.500 17h11v1.500h-11z"/></svg>
<div style="position:absolute;left:1340px;top:595px;width:340px;height:35px;background:#fff;border:1px solid #9a9aa0;box-sizing:border-box;"></div>
<span style="position:absolute;left:1345.500px;top:596.0px;line-height:30px;font-family:'DejaVu Sans','Noto Sans CJK JP',sans-serif;font-size:17px;color:#000;white-space:pre">0.00000001</span>
<div style="position:absolute;left:1340px;top:664px;width:340px;height:96px;background:#fff;border:1px solid #9a9aa0;box-sizing:border-box;"></div>
<div style="position:absolute;left:1341.5px;top:666px;width:310px;height:23px;background:#0078d7;"></div>
<div style="position:absolute;left:1652px;top:665px;width:27px;height:94px;background:#f0f0f0;"></div>
<span style="position:absolute;left:1345.500px;top:663.5px;line-height:30px;font-family:'DejaVu Sans','Noto Sans CJK JP',sans-serif;font-size:17px;color:#fff;white-space:pre">Dopn43</span>
<span style="position:absolute;left:1345.500px;top:686.5px;line-height:30px;font-family:'DejaVu Sans','Noto Sans CJK JP',sans-serif;font-size:17px;color:#000;white-space:pre">Dopn64</span>
<span style="position:absolute;left:1345.500px;top:709.5px;line-height:30px;font-family:'DejaVu Sans','Noto Sans CJK JP',sans-serif;font-size:17px;color:#000;white-space:pre">Dopn86</span>
<span style="position:absolute;left:1345.500px;top:732.5px;line-height:30px;font-family:'DejaVu Sans','Noto Sans CJK JP',sans-serif;font-size:17px;color:#000;white-space:pre">Dopn1210</span>
<div style="position:absolute;left:1659px;top:676px;width:0;height:0;border-left:6px solid transparent;border-right:6px solid transparent;border-bottom:8px solid #a0a0a0"></div>
<div style="position:absolute;left:1659px;top:740px;width:0;height:0;border-left:6px solid transparent;border-right:6px solid transparent;border-top:8px solid #a0a0a0"></div>
<span style="position:absolute;white-space:pre;left:1020px;top:803.02px;height:30px;line-height:30px;font-family:'DejaVu Sans','Noto Sans CJK JP',sans-serif;font-size:17.5px;color:#000;font-weight:normal;transform:scaleX(0.9952);transform-origin:0 50%;">微分方程式を</span>
<span style="position:absolute;white-space:pre;left:1131px;top:802.50px;height:30px;line-height:30px;font-family:'DejaVu Sans','Noto Sans CJK JP',sans-serif;font-size:17.5px;color:#000;font-weight:normal;letter-spacing:0.238px;">d2yi/dt2 = f(t, y1, y2, ..., yN) (i = 1, ..., N)</span>
<span style="position:absolute;white-space:pre;left:1516px;top:803.02px;height:30px;line-height:30px;font-family:'DejaVu Sans','Noto Sans CJK JP',sans-serif;font-size:17.5px;color:#000;font-weight:normal;transform:scaleX(0.8952);transform-origin:0 50%;">で表す</span>
<span style="position:absolute;white-space:pre;left:1020px;top:848.50px;height:30px;line-height:30px;font-family:'DejaVu Sans','Noto Sans CJK JP',sans-serif;font-size:17.5px;color:#000;font-weight:normal;letter-spacing:0.226px;">(*) t, y1, y2, ..., yN, y'1, y'2, ..., y'N</span>
<span style="position:absolute;white-space:pre;left:1340.5px;top:849.02px;height:30px;line-height:30px;font-family:'DejaVu Sans','Noto Sans CJK JP',sans-serif;font-size:17.5px;color:#000;font-weight:normal;transform:scaleX(0.9131);transform-origin:0 50%;">を1行とし, 最初の行には初期値を与える</span>
<div style="position:absolute;left:1001px;top:913px;width:115.5px;height:37px;background:#fdfdfd;border:1px solid #d0d0d0;border-bottom-color:#bcbcbc;border-radius:4px;box-sizing:border-box;"></div>
<span style="position:absolute;white-space:pre;left:1022px;top:917.02px;height:30px;line-height:30px;font-family:'DejaVu Sans','Noto Sans CJK JP',sans-serif;font-size:17.5px;color:#000;font-weight:normal;transform:scaleX(0.9202);transform-origin:0 50%;">ヘルプ(<u>H</u>)</span>
<div style="position:absolute;left:1139px;top:913px;width:140.5px;height:37px;background:#fdfdfd;border:1px solid #d0d0d0;border-bottom-color:#bcbcbc;border-radius:4px;box-sizing:border-box;"></div>
<span style="position:absolute;white-space:pre;left:1156px;top:917.02px;height:30px;line-height:30px;font-family:'DejaVu Sans','Noto Sans CJK JP',sans-serif;font-size:17.5px;color:#000;font-weight:normal;transform:scaleX(1.0579);transform-origin:0 50%;">保存/読込(<u>S</u>)</span>
<div style="position:absolute;left:1426px;top:913px;width:133px;height:37px;background:#fdfdfd;border:1px solid #d0d0d0;border-bottom-color:#bcbcbc;border-radius:4px;box-sizing:border-box;"></div>
<span style="position:absolute;white-space:pre;left:1442px;top:917.02px;height:30px;line-height:30px;font-family:'DejaVu Sans','Noto Sans CJK JP',sans-serif;font-size:17.5px;color:#000;font-weight:normal;transform:scaleX(1.0376);transform-origin:0 50%;">計算開始(<u>C</u>)</span>
<div style="position:absolute;left:1581px;top:913px;width:116px;height:37px;background:#fdfdfd;border:1px solid #d0d0d0;border-bottom-color:#bcbcbc;border-radius:4px;box-sizing:border-box;"></div>
<span style="position:absolute;white-space:pre;left:1607px;top:917.02px;height:30px;line-height:30px;font-family:'DejaVu Sans','Noto Sans CJK JP',sans-serif;font-size:17.5px;color:#000;font-weight:normal;transform:scaleX(1.0551);transform-origin:0 50%;">終了(<u>X</u>)</span>
</body></html>
